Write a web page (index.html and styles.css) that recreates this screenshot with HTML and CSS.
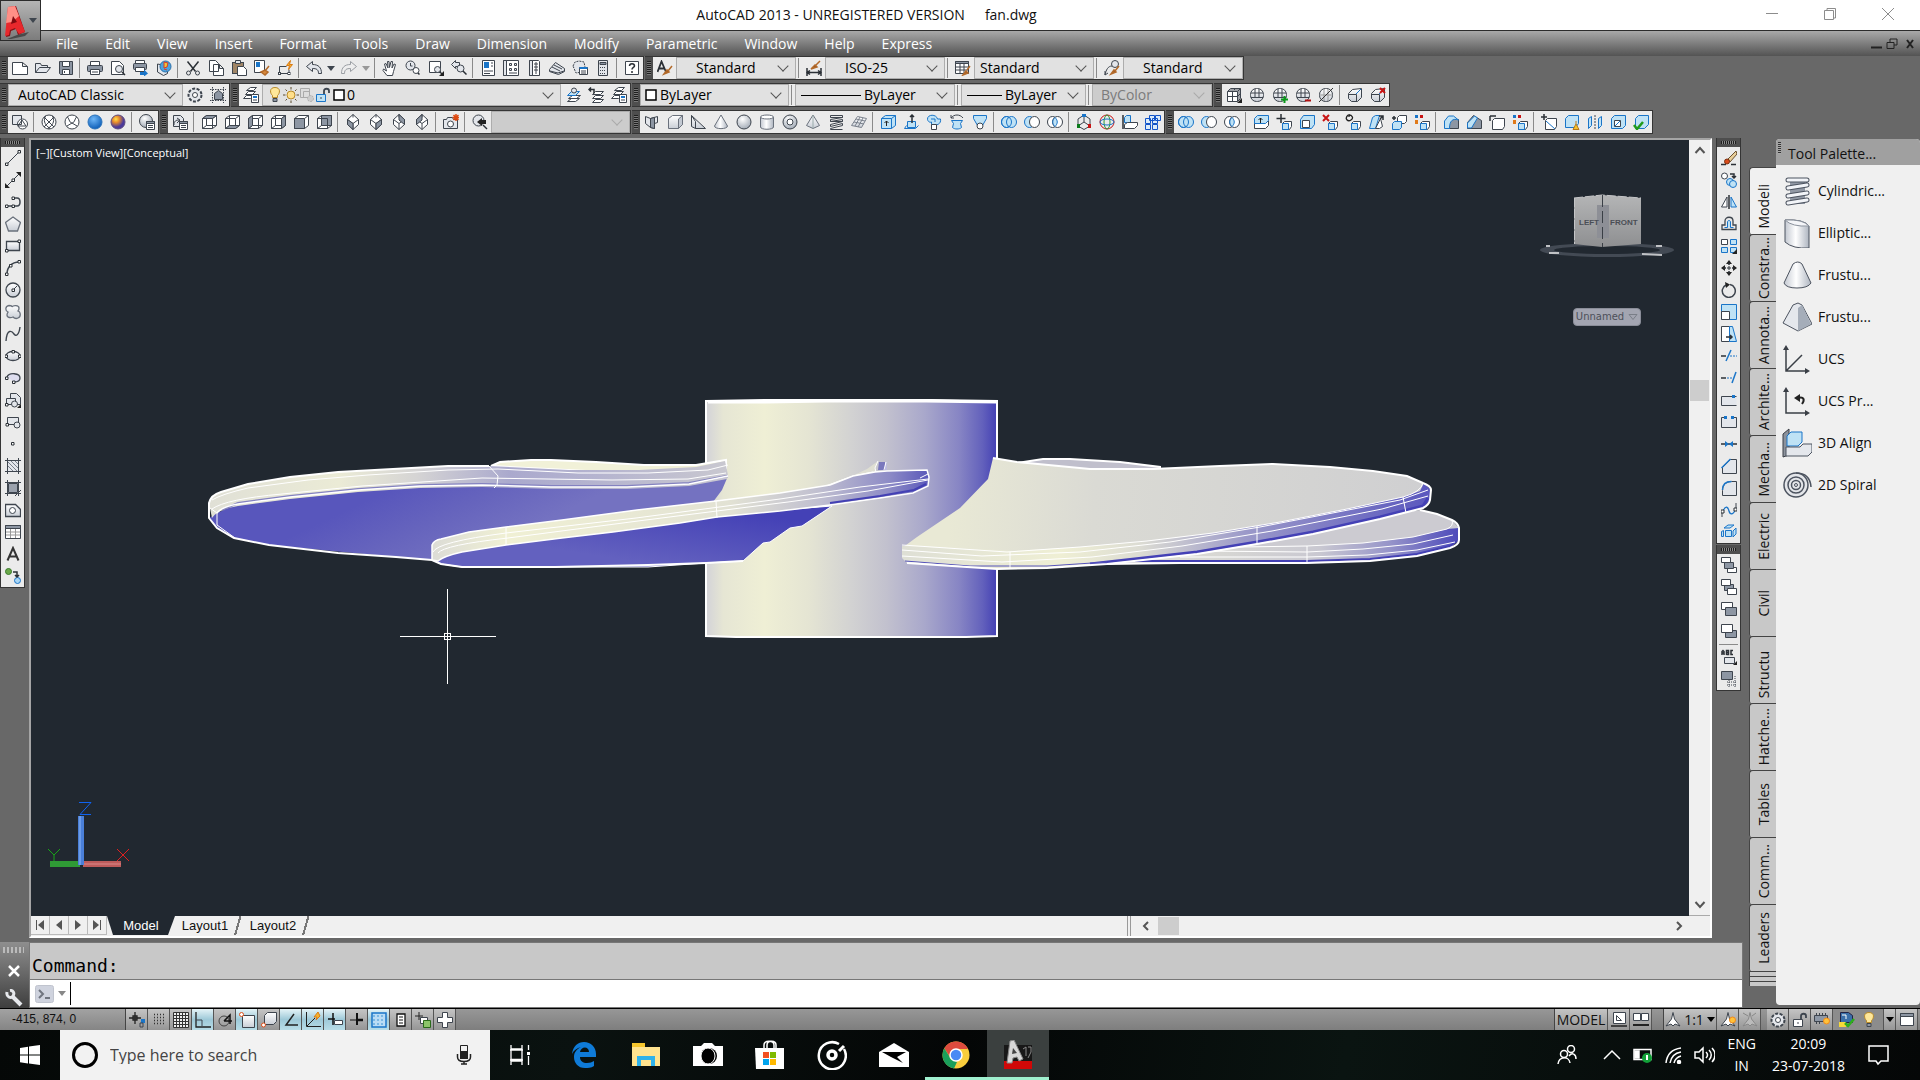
FILE: index.html
```html
<!DOCTYPE html>
<html lang="en">
<head>
<meta charset="utf-8">
<title>AutoCAD 2013 - fan.dwg</title>
<link rel="stylesheet" href="styles.css">
</head>
<body>
<svg class="sprite" width="0" height="0" aria-hidden="true">
<defs>
<linearGradient id="gs" x1="0" y1="0" x2="0" y2="1"><stop offset="0" stop-color="#fff"/><stop offset="1" stop-color="#c9ced6"/></linearGradient>
<linearGradient id="gh" x1="0" y1="0" x2="1" y2="0"><stop offset="0" stop-color="#c3c8d1"/><stop offset=".45" stop-color="#fff"/><stop offset="1" stop-color="#aeb5c0"/></linearGradient>
<radialGradient id="gsph" cx=".4" cy=".3" r=".7"><stop offset="0" stop-color="#fff"/><stop offset="1" stop-color="#a5adb8"/></radialGradient>
<radialGradient id="gblue" cx=".4" cy=".3" r=".7"><stop offset="0" stop-color="#6db6f7"/><stop offset="1" stop-color="#0f5fb8"/></radialGradient>
<radialGradient id="gsun" cx=".35" cy=".3" r=".7"><stop offset="0" stop-color="#ffe04a"/><stop offset=".35" stop-color="#e88a2c"/><stop offset=".8" stop-color="#4b3a9a"/></radialGradient>
</defs>
<symbol id="new" viewBox="0 0 16 16"><path class="w" d="M.5 2.500h10l5 4v8H.5zM10.500 2.500v4h5"/></symbol>
<symbol id="open" viewBox="0 0 16 16"><path class="s" d="M.5 12.500v-9h5l1 2h6v2M.5 12.500l4-5h11l-4 5z"/></symbol>
<symbol id="save" viewBox="0 0 16 16"><path class="g" d="M1.500 1.500h13v13h-12l-1-1z"/><path class="w" d="M4.500 1.500h7v5h-7zM4.500 9.500h7v5h-7z"/><path d="M6.500 11v2"/></symbol>
<symbol id="print" viewBox="0 0 16 16"><path class="w" d="M3.500 1.500h9v4h-9z"/><rect class="g" x=".5" y="5.500" width="15" height="6" rx="1"/><path class="w" d="M3.500 9.500h9v5h-9zM5 12h6"/></symbol>
<symbol id="preview" viewBox="0 0 16 16"><path class="w" d="M1.500 1.500h8l4 4v9h-12z"/><circle class="s" cx="9" cy="9" r="3.500"/><path class="k2" d="M12 12l3 3"/></symbol>
<symbol id="plot" viewBox="0 0 16 16"><path class="w" d="M2.500.5h9v3h-9z"/><rect class="g" x=".5" y="3.500" width="13" height="6" rx="1"/><path class="w" d="M2.500 7.500h9v4h-9z"/><path class="bf" d="M7 12h4V9.500l4 4-4 3V15H7z"/></symbol>
<symbol id="globe" viewBox="0 0 16 16"><path class="s" d="M1.500 4v8l6 3.500 4-2V6z"/><circle cx="9.500" cy="6.500" r="5.500" fill="#4ba3df" stroke="#2c6ea8"/><path fill="#f0c23a" stroke="#d33b2a" d="M8 2l4 1-1 4-3 1zM8 9l3 1"/></symbol>
<symbol id="cut" viewBox="0 0 16 16"><path class="k2" d="M2.500 1.500l8 10M13.500 1.500l-8 10"/><ellipse cx="3.500" cy="13" rx="2" ry="2"/><ellipse cx="12.500" cy="13" rx="2" ry="2"/></symbol>
<symbol id="copy" viewBox="0 0 16 16"><path class="w" d="M1.500.5h6l3 3v8h-9zM5.500 4.500h6l4 4v7h-10zM11.500 4.500v4h4"/></symbol>
<symbol id="paste" viewBox="0 0 16 16"><rect x="1.500" y="2.500" width="11" height="11" fill="#a08566"/><path class="s" d="M4.500.5h5v3h-5z"/><path class="w" d="M6.500 6.500h6l3 3v6h-9z"/></symbol>
<symbol id="match" viewBox="0 0 16 16"><path class="w" d="M.5.5h10v12H.5z"/><path class="bf" d="M2 2h4v5H2z"/><path stroke="#b36a2a" fill="#d88a3c" stroke-width="1.500" d="M15 6l-4 5M7 12l4-2 3 2-3 3z"/></symbol>
<symbol id="blk" viewBox="0 0 16 16"><path d="M2.500 13.500v-7h7M2.500 13.500H12v-4" /><rect class="w" x="1.500" y="12.500" width="2" height="2"/><rect class="w" x="11" y="12.500" width="2" height="2"/><path fill="#f5b32c" stroke="#d97a16" d="M13.500.5l-4 5h3l-1 4 4-5h-3z"/></symbol>
<symbol id="undo" viewBox="0 0 16 16"><path class="s" d="M.5 6.500l6-5v3c6 0 9 3 9 9h-3c0-4-2-5-6-5v3z"/></symbol>
<symbol id="redo" viewBox="0 0 16 16"><path fill="#eee" stroke="#9a9ea3" d="M15.500 6.500l-6-5v3c-6 0-9 3-9 9h3c0-4 2-5 6-5v3z"/></symbol>
<symbol id="pan" viewBox="0 0 16 16"><path class="w" d="M5 15.500l-4-5 .5-1.500 3 2-2-7 1.500-.5 2 4.500-.5-6.500H7l.5 6 1.500-6h1.500l-.5 6.500 2-4 1.500.5-2 7-1 4z"/></symbol>
<symbol id="zrt" viewBox="0 0 16 16"><circle class="s" cx="5.500" cy="5.500" r="4.500"/><path class="k2" d="M9 9l5.500 5.500"/><path d="M5.500 3v3h2"/><circle class="w" cx="11" cy="10.500" r="3"/></symbol>
<symbol id="zwin" viewBox="0 0 16 16"><path class="w" d="M1.500 1.500h11v11h-11z"/><circle class="s" cx="9.500" cy="9.500" r="3"/><path class="k2" d="M12 12l2 2"/><path class="k" d="M16 11v5h-5z"/></symbol>
<symbol id="zprev" viewBox="0 0 16 16"><path class="s" d="M.5 4.500l4-4v2h4v4h-4v2z"/><circle class="s" cx="9.500" cy="8.500" r="3.500"/><path class="k2" d="M12 11l3.500 3.500"/></symbol>
<symbol id="props" viewBox="0 0 16 16"><path class="w" d="M2.500.5h12v15h-12z"/><path class="bf" d="M4 2h5v6H4z"/><path d="M4 11h9M4 13.500h6M11 3h2M11 6h2"/></symbol>
<symbol id="dc" viewBox="0 0 16 16"><path class="w" d="M.5.5h15v15H.5z"/><path class="s" d="M.5.5h3v15h-3zM6.500 3.500h2v2h-2zM11.500 3.500h2v2h-2zM6.500 8.500h2v2h-2zM11.500 8.500h2v2h-2z"/><path d="M6 13h8"/></symbol>
<symbol id="tp" viewBox="0 0 16 16"><path class="w" d="M3.500.5h9l1 1v14h-10z"/><path class="s" d="M3.500.5h3v15h-3z"/><path d="M8 4h4M8 7h4M8 10h4M10 2v12"/></symbol>
<symbol id="sheet" viewBox="0 0 16 16"><path class="s" d="M.5 9.500l6-7 9 6v3l-6 3-9-3z"/><path d="M1 11l8 2 6-2M3 7l8 4M5 5l8 4"/></symbol>
<symbol id="mark" viewBox="0 0 16 16"><path stroke-dasharray="2 1" class="s" d="M1 6l2-4 4-1 5 1 1 5-3 5-6 1z"/><path class="w" d="M7.500 7.500h8v7h-8z"/><path class="bf" d="M7.500 7h8v2h-8z"/><path d="M9 11h5M9 13h5"/></symbol>
<symbol id="calc" viewBox="0 0 16 16"><path class="s" d="M3.500.5h9v15h-9z"/><path class="g" d="M5 2.500h6v2H5z"/><path stroke-dasharray="1 1" d="M5 7.500h6M5 10.500h6M5 13.500h6"/></symbol>
<symbol id="help" viewBox="0 0 16 16"><path class="w" d="M1.500 1.500h13v13h-13z"/><path class="k2" d="M5.500 6c0-3 5-3 5 0 0 1.500-2.500 1.500-2.500 3.500M8 11v2"/></symbol>
<symbol id="tsty" viewBox="0 0 16 16"><path stroke="#2b3036" stroke-width="1.800" d="M.5 12L4.500 1.500 9 12M2 8.500h5"/><path stroke="#b36a2a" fill="#7c4a26" stroke-width="1.500" d="M15 6l-4 5M7 14l3-4 2 2z"/></symbol>
<symbol id="dsty" viewBox="0 0 16 16"><path class="k2" d="M1 8v8M15 8v8M1 12.500h14M4 10.500l-3 2 3 2M12 10.500l3 2-3 2"/><path stroke="#b36a2a" fill="#7c4a26" stroke-width="1.500" d="M14 1l-5 5M5 9l4-4 2 2z"/></symbol>
<symbol id="tbsty" viewBox="0 0 16 16"><path class="w" d="M.5 1.500h13v12H.5z"/><path class="g" d="M.5 1.500h13v2H.5z"/><path d="M.5 7h13M.5 10h13M5 3v10M9 3v10"/><path stroke="#b36a2a" fill="#7c4a26" stroke-width="1.500" d="M15 6l-3 4M8 15l3-4 2 2z"/></symbol>
<symbol id="mlsty" viewBox="0 0 16 16"><circle cx="11" cy="4" r="3.500" class="s"/><path d="M8 6c-4 0-6 4-7 9M1 11v4l3-2"/><path stroke="#b36a2a" fill="#7c4a26" stroke-width="1.500" d="M15 6l-4 5M7 14l3-4 2 2z"/></symbol>
<symbol id="gear" viewBox="0 0 16 16"><circle cx="8" cy="8" r="6.500" class="s" stroke-dasharray="3 1.500" stroke-width="2"/><circle cx="8" cy="8" r="5" class="s" stroke="none"/><circle cx="8" cy="8" r="2.500" class="w"/></symbol>
<symbol id="wsp" viewBox="0 0 16 16"><path stroke-dasharray="1.500 1" d="M0 2.500h16M0 13.500h16M2.500 0v16M13.500 0v16"/><path class="g" d="M4.500 12.500v-6l4-3 4 3v6z"/></symbol>
<symbol id="layp" viewBox="0 0 16 16"><path class="w" d="M3.500 3.500l4-3h6l-3 3zM2.500 7.500l3-3h7l-3 3zM.5 11.500l3-3h7l-3 3z"/><path class="w" d="M8.500 7.500h7v8h-7z"/><path class="bf" d="M10 9h4v2h-4z"/><path d="M10 13h4"/></symbol>
<symbol id="bulb" viewBox="0 0 16 16"><path fill="#ffe89a" stroke="#b88a2a" d="M8 .5c-6 0-5 6-2.500 8v2h5v-2C13 6.500 14 .5 8 .5z"/><path class="g" d="M6 11.500h4v3H6z"/></symbol>
<symbol id="sun" viewBox="0 0 16 16"><path stroke="#5a4a2a" stroke-dasharray="2.500 11 2.500 0" d="M8 0v16M0 8h16"/><path stroke="#5a4a2a" stroke-dasharray="2 11.500 2 0" d="M2.500 2.500l11 11M13.500 2.500l-11 11"/><circle cx="8" cy="8" r="4" fill="#ffdf8a" stroke="#b88a2a"/></symbol>
<symbol id="vpf" viewBox="0 0 16 16"><path fill="#ddd" stroke="#aaa" d="M1.500 1.500h9v9h-9zM4.500 4.500h6v6h-6z"/><circle cx="11.500" cy="11.500" r="3" fill="#ccc" stroke="#aaa" stroke-dasharray="2 1"/></symbol>
<symbol id="lock" viewBox="0 0 16 16"><path class="b" d="M1.500 7.500h9v7h-9z"/><path stroke-width="1.800" stroke="#3c444e" d="M9 7V4c0-3 5-3 5 0v2"/><path d="M6 10v2"/></symbol>
<symbol id="lockg" viewBox="0 0 16 16"><path class="w" d="M1.500 7.500h9v7h-9z"/><path stroke-width="1.800" stroke="#3c444e" d="M9 7V4c0-3 5-3 5 0v2"/><path d="M6 10v2"/></symbol>
<symbol id="sq" viewBox="0 0 16 16"><path fill="#fff" stroke="#000" stroke-width="1.500" d="M3 3h10v10H3z"/></symbol>
<symbol id="lay" viewBox="0 0 16 16"><path class="w" d="M3.500 11.500l4-3h8l-4 3zM2.500 14.500l4-3h8l-4 3z"/><path class="b" d="M2.500 8.500l4-4h8l-4 4z"/><circle class="s" cx="9" cy="3.500" r="2.500"/></symbol>
<symbol id="layb" viewBox="0 0 16 16"><path class="w" d="M4.500 7.500l3-3h8l-3 3zM4.500 11.500l3-3h8l-3 3zM4.500 15.500l3-3h8l-3 3z"/><path class="k2" d="M1 2.500h5v4M3 .5l-2 2 2 2"/></symbol>
<symbol id="mesh" viewBox="0 0 16 16"><path class="w" d="M1.500 4.500l3-3h10v10l-3 3h-10z"/><path d="M1.500 4.500h10v10M11.500 4.500l3-3M6.500 4.500v10M1.500 9.500h10l3-3M3 3h10v10M8 3l2-2"/><path class="k" d="M16 11v5h-5z"/></symbol>
<symbol id="sm" viewBox="0 0 16 16"><rect x="1.500" y="1.500" width="13" height="13" rx="6" fill="url(#gs)"/><path d="M2 6h12M2 10.500h12M6 2v8M10 2v8"/></symbol>
<symbol id="smp" viewBox="0 0 16 16"><use href="#sm"/><path stroke="#0a9a1a" stroke-width="2" d="M9 12.500h7M12.500 9v7"/></symbol>
<symbol id="smm" viewBox="0 0 16 16"><use href="#sm"/><path stroke="#b01010" stroke-width="2" d="M10 13.500h6"/></symbol>
<symbol id="smn" viewBox="0 0 16 16"><rect x="1.500" y="1.500" width="13" height="13" rx="6" fill="url(#gs)"/><path stroke="#999" d="M6 2v12M10 2v12M2 8h12"/><path stroke="#333" d="M1 15L15 1"/></symbol>
<symbol id="crs" viewBox="0 0 16 16"><path fill="url(#gs)" d="M1.500 6.500l4-4 9-1v9l-4 4-6 0-3-3z"/><path stroke="#1a75c8" d="M9 7l5-5"/><path d="M1.500 7.500h8v7"/></symbol>
<symbol id="crx" viewBox="0 0 16 16"><use href="#crs"/><path stroke="#c81414" stroke-width="2" d="M10 1l5 5M15 1l-5 5"/></symbol>
<symbol id="wf2" viewBox="0 0 16 16"><path class="s" d="M.5 1.500h9v9h-9z"/><circle cx="10.500" cy="10" r="5" class="w"/><path d="M5.500 10.500h4v-5M6 12l4-6 4 6z"/></symbol>
<symbol id="wire" viewBox="0 0 16 16"><circle class="w" cx="8" cy="8" r="7"/><path d="M3 3l10 10M13 3L3 13M5 1.500c-3 4-2 9 4 13M11 1.500c3 4 2 9-4 13"/></symbol>
<symbol id="hid" viewBox="0 0 16 16"><circle class="w" cx="8" cy="8" r="7"/><path d="M3 3c2 0 2 6 5 6s3-6 5-6M3 12l5-3M13 12l-5-3"/></symbol>
<symbol id="real" viewBox="0 0 16 16"><circle cx="8" cy="8" r="7" fill="url(#gblue)" stroke="#2d74bb"/></symbol>
<symbol id="conc" viewBox="0 0 16 16"><circle cx="8" cy="8" r="7" fill="url(#gsun)" stroke="#5d4a80"/></symbol>
<symbol id="vsm" viewBox="0 0 16 16"><circle cx="7" cy="7" r="6.500" fill="url(#gsph)"/><path class="w" d="M7.500 7.500h8v8h-8z"/><path class="g" d="M7.500 7.500h8v2h-8z"/><path d="M9 11.500h5M9 13.500h5"/></symbol>
<symbol id="view" viewBox="0 0 16 16"><path class="s" d="M1.500 12.500v-11h7l3 3v8z"/><path d="M2 11c0-4 2-5 5-5M5 4l3 2-3 3"/><path class="w" d="M7.500 7.500h8v8h-8z"/><path class="g" d="M7.500 7.500h8v2h-8z"/><path d="M9 11.500h5M9 13.500h5"/></symbol>
<symbol id="box" viewBox="0 0 16 16"><path class="w" d="M1.500 4.500l4-3h10v10l-4 3h-10z"/><path d="M1.500 4.500h10v10M11.500 4.500l4-3M5.500 1.500v10h10M5.500 11.500l-4 3"/></symbol>
<symbol id="vt" viewBox="0 0 16 16"><use href="#box"/><path class="g" d="M1.500 4.500l4-3h10l-4 3z"/></symbol>
<symbol id="vb" viewBox="0 0 16 16"><use href="#box"/><path class="g" d="M1.500 14.500l4-3h10l-4 3z"/></symbol>
<symbol id="vl" viewBox="0 0 16 16"><use href="#box"/><path class="g" d="M1.500 4.500l4-3v10l-4 3z"/></symbol>
<symbol id="vr" viewBox="0 0 16 16"><use href="#box"/><path class="g" d="M11.500 4.500l4-3v10l-4 3z"/></symbol>
<symbol id="vf" viewBox="0 0 16 16"><path class="w" d="M1.500 4.500l4-3h10v10l-4 3h-10z"/><path d="M11.500 4.500l4-3"/><path class="g" d="M1.500 4.500h10v10h-10z"/></symbol>
<symbol id="vk" viewBox="0 0 16 16"><use href="#box"/><path class="g" d="M5.500 1.500h10v10h-10z"/><path d="M1.500 4.500h10v10"/></symbol>
<symbol id="iso" viewBox="0 0 16 16"><path class="w" d="M8 .5l5.500 5v5l-5.500 5-5.500-5v-5z"/><path d="M2.500 5.500l5.500 4 5.500-4M8 9.500v6M8 .5v3"/></symbol>
<symbol id="iso1" viewBox="0 0 16 16"><use href="#iso"/><path class="g" d="M2.500 5.500l5.500 4v6l-5.500-5z"/></symbol>
<symbol id="iso2" viewBox="0 0 16 16"><use href="#iso"/><path class="g" d="M13.500 5.500l-5.500 4v6l5.500-5z"/></symbol>
<symbol id="iso3" viewBox="0 0 16 16"><use href="#iso"/><path class="g" d="M8 .5l5.500 5v5L8 6z"/></symbol>
<symbol id="iso4" viewBox="0 0 16 16"><use href="#iso"/><path class="g" d="M8 .5l-5.500 5v5L8 6z"/></symbol>
<symbol id="cam" viewBox="0 0 16 16"><path class="s" d="M.5 5.500h3l1-2h5l1 2h4v9H.5z"/><circle cx="7.500" cy="10" r="3" class="w"/><path stroke="#e04a10" stroke-width="1.500" d="M13 0v7M9.500 3.500h7M10.500 1l5 5M15.500 1l-5 5"/></symbol>
<symbol id="vprev" viewBox="0 0 16 16"><circle class="s" cx="6.500" cy="6.500" r="5.500"/><path class="k" d="M5 8l5-4v2h4v4h-4v2z"/><path class="k2" d="M11 11l4 4"/></symbol>
<symbol id="psol" viewBox="0 0 16 16"><path class="s" d="M1.500 2.500l5 2v9l-5-4zM6.500 4.500l7-2v6l-3 1v5l-4-1z"/><path class="g" d="M6.500 4.500l4-1v11l-4-1z"/></symbol>
<symbol id="cube" viewBox="0 0 16 16"><path fill="url(#gs)" stroke="#6a717c" d="M1.500 4.500l4-3h10v9l-4 4h-10z"/><path class="lg" stroke="#6a717c" d="M11.500 5l4-3.500v9l-4 4z"/></symbol>
<symbol id="wedge" viewBox="0 0 16 16"><path fill="url(#gs)" d="M1.500 1.500v11l4 2h10z"/><path d="M1.500 1.500l4 6v7"/></symbol>
<symbol id="cone" viewBox="0 0 16 16"><path fill="url(#gh)" stroke="#6a717c" d="M8 1l6.500 11c0 3.500-13 3.500-13 0z"/></symbol>
<symbol id="sph" viewBox="0 0 16 16"><circle cx="8" cy="8" r="7" fill="url(#gsph)"/></symbol>
<symbol id="cyl" viewBox="0 0 16 16"><path fill="url(#gh)" stroke="#6a717c" d="M1.500 3v10c0 3 13 3 13 0V3"/><ellipse class="w" stroke="#6a717c" cx="8" cy="3" rx="6.500" ry="2"/></symbol>
<symbol id="tor" viewBox="0 0 16 16"><circle cx="8" cy="8" r="7" fill="url(#gsph)"/><circle class="w" cx="8" cy="8" r="3"/></symbol>
<symbol id="pyr" viewBox="0 0 16 16"><path fill="url(#gs)" stroke="#6a717c" d="M8 1l6.500 10.500-6.500 3-6.500-3z"/><path stroke="#9aa" d="M8 1v13.500"/></symbol>
<symbol id="helix" viewBox="0 0 16 16"><path d="M2.500 1.500h12v2l-12 2v2l12-2v2l-12 3v2l12-3v2l-12 3v1h12M2.500 1.500v2h12M2.500 7.500h12"/></symbol>
<symbol id="psurf" viewBox="0 0 16 16"><path fill="url(#gs)" stroke="#7a818c" d="M6.500 2.500l9 2-5 9-10-2z"/><path stroke="#7a818c" d="M3 8l10 2M5 5l9 2M9 3l-5 9M12 4l-5 9"/></symbol>
<symbol id="bx" viewBox="0 0 16 16"><path class="b" d="M1.500 4.500l4-3h10v10l-4 3h-10z"/><path stroke="#1a75c8" d="M1.500 4.500h10v10M11.500 4.500l4-3"/><path stroke="#222" d="M6.500 12V7M4.500 9l2-2 2 2"/></symbol>
<symbol id="ext" viewBox="0 0 16 16"><path class="b" d="M4.500 7.500h8v6h-8z"/><path stroke="#1a75c8" d="M1.500 14.500h11l3-3M1.500 14.500l2-3"/><path class="k2" d="M9 9V1M7 3l2-2 2 2"/></symbol>
<symbol id="swp" viewBox="0 0 16 16"><path class="b" d="M1.500 5c0-5 9-5 10 0h3c1 5-4 7-9 6v-3c-2 1-4-1-4-3zM5 5h4v3"/><path class="w" d="M5.500 10.500h5v5h-5z"/></symbol>
<symbol id="rev" viewBox="0 0 16 16"><path class="b" d="M2.500 6.500h11l-2 3 1 4c-2 2-7 2-9 0l1-4z"/><path d="M2 4c3-4 9-4 12 0M2 1v3h3"/></symbol>
<symbol id="loft" viewBox="0 0 16 16"><path class="b" d="M1.500 1.500h13v3l-4 7h-5l-4-7z"/><circle class="w" cx="8" cy="12" r="3"/></symbol>
<symbol id="uni" viewBox="0 0 16 16"><ellipse class="b" cx="5.500" cy="8" rx="5" ry="5.500"/><ellipse class="b" cx="10.500" cy="8" rx="5" ry="5.500"/><ellipse cx="5.500" cy="8" rx="5" ry="5.500" stroke="#1a75c8"/></symbol>
<symbol id="sub" viewBox="0 0 16 16"><ellipse class="b" cx="5.500" cy="8" rx="5" ry="5.500"/><ellipse class="w" cx="10.500" cy="8" rx="5" ry="5.500"/></symbol>
<symbol id="int" viewBox="0 0 16 16"><ellipse class="w" cx="5.500" cy="8" rx="5" ry="5.500"/><ellipse class="w" cx="10.500" cy="8" rx="5" ry="5.500"/><path class="b" d="M8 3.500c3 3 3 6 0 9-3-3-3-6 0-9z"/></symbol>
<symbol id="mv3" viewBox="0 0 16 16"><path d="M8 1l6 4v7l-6 3.500L2 12V5zM8 8V1M8 8l6 4M8 8l-6 4"/><path fill="#c81414" stroke="none" d="M12 10h3v4h-3z"/><path fill="#0a7a1a" stroke="none" d="M1 10h3v4H1z"/><path class="bf" d="M6 0h4v3H6z"/></symbol>
<symbol id="rot3" viewBox="0 0 16 16"><circle cx="8" cy="8" r="7" stroke="#c81414"/><ellipse cx="8" cy="8" rx="3" ry="7" stroke="#2a9a3a"/><ellipse cx="8" cy="8" rx="7" ry="3" stroke="#1a75c8"/></symbol>
<symbol id="al3" viewBox="0 0 16 16"><path class="b" d="M2.500 3.500l2-2h4v7h-6z"/><path class="w" d="M2.500 10.500l3-2h10v3l-3 3h-10z"/><path class="k2" d="M1 1v14"/></symbol>
<symbol id="ar3" viewBox="0 0 16 16"><path fill="#dcecfa" stroke="#1254c8" d="M4.500 1.500h5v5h-5zM10.500 1.500h5v5h-5zM.5 4.500h5v5h-5zM7.500 4.500h5v5h-5zM.5 10.500h5v5h-5zM7.500 10.500h5v5h-5z"/></symbol>
<symbol id="exf" viewBox="0 0 16 16"><path class="w" d="M1.500 8.500l3-2h11v5l-3 3h-11z"/><path class="b" d="M1.500 4.500l3-3h11v5l-3 3h-11z"/><path stroke="#222" d="M7.500 9V4M5.500 6l2-2 2 2"/></symbol>
<symbol id="sb" viewBox="0 0 16 16"><path class="w" d="M6.500 9.500l2-2h7v5l-2 3h-7z"/><path class="b" d="M6.500 9.500h6v6h-6z"/></symbol>
<symbol id="mvf" viewBox="0 0 16 16"><use href="#sb"/><path class="k2" d="M5 0v9M.5 4.500h9"/></symbol>
<symbol id="off" viewBox="0 0 16 16"><path class="b" d="M1.500 5.500l3-4h11v9l-3 4h-11z"/><path class="w" d="M3.500 6.500h7v7h-7z"/></symbol>
<symbol id="delf" viewBox="0 0 16 16"><use href="#sb"/><path stroke="#c81414" stroke-width="2" d="M1 1l6 6M7 1L1 7"/></symbol>
<symbol id="rof" viewBox="0 0 16 16"><use href="#sb"/><path stroke="#222" stroke-width="1.300" d="M3 1c-4 4 0 7 3 5s1-5-2-5M4 0v3"/></symbol>
<symbol id="tap" viewBox="0 0 16 16"><path class="b" d="M1.500 14.500l3-11 3-2h4l-4 13z"/><path d="M7.500 14.500l5-10 2 8-3 2z" class="w"/><path class="k2" d="M11 2h4v4M15 2l-3 3"/></symbol>
<symbol id="cpf" viewBox="0 0 16 16"><path class="w" d="M6.500 3.500l2-2h7v6l-2 2h-7z"/><path class="b" d="M1.500 9.500l2-2h7v6l-2 2h-7z"/><path class="k2" d="M1 4h4M3 2v4"/></symbol>
<symbol id="colf" viewBox="0 0 16 16"><use href="#sb"/><path class="bf" d="M1 1h3v3H1z"/><path fill="#c81414" stroke="none" d="M6 1h3v3H6z"/><path fill="#e07a1a" stroke="none" d="M1 6h3v4H1z"/></symbol>
<symbol id="fil" viewBox="0 0 16 16"><path class="g" d="M5.500 5.500h10v9h-10z"/><path class="b" d="M1.500 7l4-5h5l5 4c-6-2-9 1-9 8.500h-5z"/></symbol>
<symbol id="cha" viewBox="0 0 16 16"><path class="g" d="M1.500 8.500l6-7 8 5v8h-14z"/><path class="b" d="M1.500 9l7-7 3 2-6 10h-4z"/></symbol>
<symbol id="cpe" viewBox="0 0 16 16"><path class="w" d="M3.500 6.500l2-2h10v8l-2 3h-10z"/><path class="k2" d="M1 2h6M1 2v5"/></symbol>
<symbol id="imp" viewBox="0 0 16 16"><path class="w" d="M4.500 6.500l2-2h9v8l-2 3h-9z"/><path stroke="#1a75c8" d="M5 7l9 8"/><path class="k2" d="M3 0v6M0 3h6"/></symbol>
<symbol id="cln" viewBox="0 0 16 16"><path class="b" d="M1.500 4.500l3-3h10v8l-3 4h-10z"/><path fill="#f5c32c" stroke="#b87a16" d="M12 7v3l3 5.500H9L12 10"/></symbol>
<symbol id="sepr" viewBox="0 0 16 16"><path class="b" d="M1.500 4.500l3-2v9l-3 3zM11.500 4.500l3-2v9l-3 3z"/><path stroke-dasharray="2 1" d="M8 1v14"/></symbol>
<symbol id="shl" viewBox="0 0 16 16"><path class="b" d="M1.500 4.500l3-3h11v10l-3 3h-11z"/><path class="w" d="M4.500 6.500h6v6h-6z"/><path stroke="#1a75c8" d="M5 12l5-5"/></symbol>
<symbol id="chk" viewBox="0 0 16 16"><path class="b" d="M2.500 4.500l3-3h10v9l-4 4h-9z"/><path stroke="#1f9a1a" stroke-width="2.500" d="M1 11l3 4 6-7"/></symbol>
<symbol id="line" viewBox="0 0 16 16"><path d="M2 14L14 2"/><path class="n" d="M.5 13h2.500v2.500H.5zM13 .5h2.500V3H13z"/></symbol>
<symbol id="xl" viewBox="0 0 16 16"><path d="M2 14L14 2"/><path class="k" d="M0 11v5h5zM16 5V0h-5z"/><path class="n" d="M7 7h2.500v2.500H7z"/></symbol>
<symbol id="pl" viewBox="0 0 16 16"><path stroke-width="1.500" d="M2 12h10c4 0 4-8 0-8H8"/><path class="n" d="M.5 11H3v2.500H.5zM7 3h2.500v2.500H7zM7 11h2.500v2.500H7z"/></symbol>
<symbol id="pent" viewBox="0 0 16 16"><path fill="url(#gs)" stroke="#6a717c" stroke-width="1.300" d="M8 1l7.500 5.500-3 8.500h-9l-3-8.500z"/></symbol>
<symbol id="rect" viewBox="0 0 16 16"><path fill="url(#gs)" stroke-width="1.300" d="M1.500 3.500h13v9h-13z"/><path class="n" d="M.5 11.500H3V14H.5zM13 2h2.500v2.500H13z"/></symbol>
<symbol id="arc" viewBox="0 0 16 16"><path stroke-width="1.500" d="M2 14C2 7 7 2 14 2"/><path class="n" d="M.5 13H3v2.500H.5zM4.500 4.500H7V7H4.500zM13 .5h2.500V3H13z"/></symbol>
<symbol id="cir" viewBox="0 0 16 16"><circle cx="8" cy="8" r="7" fill="url(#gs)" stroke-width="1.300"/><path d="M8 8l4-4"/><path class="n" d="M7 7h2.500v2.500H7z"/></symbol>
<symbol id="cloud" viewBox="0 0 16 16"><path fill="url(#gs)" stroke="#6a717c" stroke-width="1.300" d="M3 8C0 7 0 2 4 1.500c2 0 3 1 3 1.500 1-2 7-2 7 1 0 2 0 2-1 3 3 1 3 6 0 7-2 1-4 0-5-1-2 1-6 1-6-2 0-2 1-2 1-3z"/></symbol>
<symbol id="spl" viewBox="0 0 16 16"><path stroke-width="1.400" d="M1 15C2 2 7 5 9 8s5 1 6-7"/></symbol>
<symbol id="ell" viewBox="0 0 16 16"><ellipse cx="8" cy="8" rx="7" ry="4.500" fill="url(#gs)" stroke-width="1.300"/><path class="n" d="M0 7h2.500v2.500H0zM13.500 7H16v2.500h-2.500zM7 2.500h2.500V5H7z"/></symbol>
<symbol id="ella" viewBox="0 0 16 16"><path fill="#dde" stroke-width="1.300" d="M2 7c2-5 13-4 13 1 0 3-3 4-6 4"/><path class="n" d="M.5 7H3v2.500H.5zM7.500 11H10v2.500H7.500z"/></symbol>
<symbol id="ins" viewBox="0 0 16 16"><path class="s" d="M5.500 1.500h6l4 4v7h-10z"/><path class="s" d="M1.500 6.500h9v6h-9z"/><circle cx="9.500" cy="12" r="3" class="s"/><path class="k" d="M16 12v4h-4z"/><path class="n" d="M.5 11.500H3V14H.5z"/></symbol>
<symbol id="mkb" viewBox="0 0 16 16"><path class="s" d="M2.500 3.500h11v7h-11z"/><circle cx="12" cy="11" r="3" class="s"/><path class="n" d="M1 9.500h2.500V12H1z"/></symbol>
<symbol id="pt" viewBox="0 0 16 16"><path class="n" d="M6.500 6.500H9V9H6.500z"/></symbol>
<symbol id="hat" viewBox="0 0 16 16"><path fill="#e3e6eb" d="M2.500 2.500h11v11h-11z"/><path d="M0 2.500h16M0 13.500h16M2.500 0v16M13.500 0v16"/><path stroke="#7a818c" d="M3 4l9 9M3 8l5 5M6 3l7 7M10 3l3 3"/></symbol>
<symbol id="grad" viewBox="0 0 16 16"><path fill="#9aa1ac" d="M3.500 3.500h9v9h-9z"/><path d="M0 2.500h16M0 13.500h16M2.500 0v16M13.500 0v16M10 16l6-6"/></symbol>
<symbol id="reg" viewBox="0 0 16 16"><path fill="url(#gs)" stroke-width="1.300" d="M.5 2.500h10l5 5v7H.5z"/><circle class="w" cx="7.500" cy="8.500" r="3"/></symbol>
<symbol id="tab" viewBox="0 0 16 16"><path class="w" d="M.5 1.500h15v13H.5z"/><path class="g" d="M.5 1.500h15v3H.5z"/><path stroke="#999" d="M1 8h14M1 11h14M5.500 5v9M10.500 5v9"/></symbol>
<symbol id="txt" viewBox="0 0 16 16"><path stroke="#333" stroke-width="2" d="M2.500 14.500L8 2l5.500 12.500M4.500 10.500h7"/></symbol>
<symbol id="addsel" viewBox="0 0 16 16"><circle cx="3.500" cy="3.500" r="3" fill="#6aa84a" stroke="#3a7a2a"/><circle cx="12.500" cy="12.500" r="3" fill="#a9d6f5" stroke="#1a75c8"/><path class="k2" d="M8 4h4v4M10 7l2 2 2-2"/></symbol>
<symbol id="era" viewBox="0 0 16 16"><path class="k2" d="M0 14.500h5M10 14.500h5"/><path fill="#e8cf9a" stroke="#6a5030" d="M15 1l-8 8 2 3 7-8z"/><circle cx="6" cy="11.500" r="2.500" fill="#d94a1a" stroke="#7a3010"/></symbol>
<symbol id="cp" viewBox="0 0 16 16"><circle class="w" cx="3.500" cy="4" r="3"/><circle class="b" cx="9" cy="10" r="3.500"/><circle class="b" cx="12" cy="12" r="3.500"/><path class="k2" d="M9 2h4v3M11 4l2 2 2-2"/></symbol>
<symbol id="mir" viewBox="0 0 16 16"><path class="w" d="M6 3v10H.5z"/><path class="b" d="M10 3v10h5.500z"/><path class="k2" d="M8 1v14"/></symbol>
<symbol id="ofs" viewBox="0 0 16 16"><path stroke-width="1.300" d="M1 13.500V9h3V5c0-5 8-5 8 0v4h3v4.500z"/><path class="b" d="M3.500 11.500h3V6c0-2 3-2 3 0v5.500h3"/></symbol>
<symbol id="arr" viewBox="0 0 16 16"><path class="w" d="M.5 1.500h6v5h-6z"/><path class="b" d="M9.500 1.500h6v5h-6zM.5 9.500h6v5h-6zM9.500 9.500h6v5h-6z"/><path class="k" d="M16 11v5h-5z"/></symbol>
<symbol id="mov" viewBox="0 0 16 16"><path class="k" d="M8 0l3 4H5zM8 16l3-4H5zM0 8l4-3v6zM16 8l-4-3v6z"/><path class="n" d="M7 7h2v2H7z"/><path class="k2" d="M8 3v2M8 11v2M3 8h2M11 8h2"/></symbol>
<symbol id="rot" viewBox="0 0 16 16"><path stroke-width="1.500" d="M9 2.500A6.500 6.500 0 1 1 5 3"/><path class="k" d="M4 0l5 2.500L5 6z"/></symbol>
<symbol id="scl" viewBox="0 0 16 16"><path class="b" d="M.5.5h15v15H.5z"/><path class="w" d="M.5 7.500h8v8h-8z"/></symbol>
<symbol id="str" viewBox="0 0 16 16"><path class="w" d="M.5.5h8v15h-8z"/><path class="b" d="M8.500.5h3l4 15h-7z"/><path class="k2" d="M5 11h6M9 9l2 2-2 2"/></symbol>
<symbol id="trim" viewBox="0 0 16 16"><path stroke="#1a75c8" stroke-width="1.500" d="M5 13L10 2"/><path class="k2" d="M0 8h5"/><path stroke="#1a75c8" stroke-dasharray="2 1" d="M9 8h7"/></symbol>
<symbol id="extd" viewBox="0 0 16 16"><path stroke="#1a75c8" stroke-width="1.500" d="M11 13l4-11"/><path class="k2" d="M0 8h5"/><path stroke="#1a75c8" stroke-dasharray="2 1" d="M6 8h6"/></symbol>
<symbol id="brp" viewBox="0 0 16 16"><path class="s" d="M15.500 4.500H.5v9h15"/><path class="bf" d="M11 3h3v3h-3z"/></symbol>
<symbol id="brk" viewBox="0 0 16 16"><path class="s" d="M3 3.500H.5v10h15v-10H13"/><path class="bf" d="M3 2h3v3H3zM10 2h3v3h-3z"/></symbol>
<symbol id="join" viewBox="0 0 16 16"><path class="k2" d="M0 8h16"/><path class="bf" d="M4 5l4 3-4 3zM12 5L8 8l4 3z"/></symbol>
<symbol id="chm" viewBox="0 0 16 16"><path class="s" d="M1.500 15.500v-6l8-8h6v14z"/><path stroke="#1a75c8" stroke-width="1.500" d="M.5 10l9-9"/></symbol>
<symbol id="flt" viewBox="0 0 16 16"><path class="s" d="M1.500 15.500v-5c0-5 3-9 9-9h5v14z"/><path stroke="#1a75c8" stroke-width="1.500" d="M1.500 10c0-5 3-8.500 9-8.500"/></symbol>
<symbol id="bln" viewBox="0 0 16 16"><path stroke="#1a75c8" stroke-width="1.300" d="M2 9c3-6 5-4 6 0s5 4 6-2"/><path d="M1 15V9M15 1v6"/><path class="n" d="M0 8h3v3H0zM13 6h3v3h-3z"/></symbol>
<symbol id="expl" viewBox="0 0 16 16"><path class="b" d="M4.500 6.500h6v6h-6zM3 4l4-3h6l-4 3zM12 7l3-3v6l-3 3zM.5 7.500l2-1v6l-2 0z"/></symbol>
<symbol id="do1" viewBox="0 0 16 16"><path class="w" d="M.5.5h9v5h-9zM6.500 10.500h9v5h-9z"/><path class="g" d="M3.500 5.500h9v6h-9z"/></symbol>
<symbol id="do2" viewBox="0 0 16 16"><path class="g" d="M3.500 5.500h9v6h-9z"/><path class="w" d="M.5.5h9v6h-9zM6.500 9.500h9v6h-9z"/></symbol>
<symbol id="do3" viewBox="0 0 16 16"><path class="w" d="M.5 1.500h11v7H.5z"/><path class="g" d="M4.500 6.500h11v8h-11z"/></symbol>
<symbol id="do4" viewBox="0 0 16 16"><path class="g" d="M4.500 7.500h11v7h-11z"/><path class="w" d="M.5 1.500h11v8H.5z"/></symbol>
<symbol id="do5" viewBox="0 0 16 16"><path class="k2" d="M1 6V2.500l1-1 1 1V6M1 4h2M5.500 6V1.500h2v4h-2M7 3.500H5.500M12 1.500h-2v4h2"/><path class="s" d="M3.500 8.500h10v6h-10z"/><path class="k" d="M16 12v4h-4z"/></symbol>
<symbol id="do6" viewBox="0 0 16 16"><path class="g" d="M.5.5h11v8H.5z"/><path stroke-dasharray="1 1" d="M6 11h10M6 14h10M8 9v7M14 5v11"/></symbol>
<symbol id="st1" viewBox="0 0 16 16"><path stroke="#222" stroke-width="1.300" d="M0 6h12M6 0v12M4 4h4v4H4z"/><path class="bf" d="M12 7h4v4h-4z"/><path d="M11 11h3v4h-3z"/></symbol>
<symbol id="st2" viewBox="0 0 16 16"><path stroke="#333" stroke-dasharray="1 2" stroke-width="1.300" d="M3 2.500h11M3 5.500h11M3 8.500h11M3 11.500h11"/></symbol>
<symbol id="st3" viewBox="0 0 16 16"><path fill="#eee" stroke="#333" d="M.5.5h15v15H.5z"/><path stroke="#333" d="M3.500 0v16M6.500 0v16M9.500 0v16M12.500 0v16M0 3.500h16M0 6.500h16M0 9.500h16M0 12.500h16"/></symbol>
<symbol id="st4" viewBox="0 0 16 16"><path stroke="#222" stroke-width="1.300" d="M1 0v15h15"/><path d="M1 8h6v6"/></symbol>
<symbol id="st5" viewBox="0 0 16 16"><circle cx="7" cy="9" r="5" stroke="#444"/><path stroke="#111" stroke-width="1.500" d="M7 9h8M7 9l6-6v9"/></symbol>
<symbol id="st6" viewBox="0 0 16 16"><path fill="url(#gs)" d="M3.500 3.500h12v12h-12z"/><circle cx="2.500" cy="2.500" r="2" fill="#fff" stroke="#e0501a"/></symbol>
<symbol id="st7" viewBox="0 0 16 16"><path fill="url(#gs)" d="M3.500 3.500l3-3h9v9l-3 3h-9z"/><circle cx="2.500" cy="13" r="2" fill="#fff" stroke="#e0501a"/></symbol>
<symbol id="st8" viewBox="0 0 16 16"><path stroke="#222" stroke-width="1.500" d="M11 2L3 13h12"/></symbol>
<symbol id="st9" viewBox="0 0 16 16"><path stroke="#222" d="M1.500 0v14.500H16M2 14l8-8"/><path fill="#f5b32c" stroke="#d97a16" d="M13 0l-4 5h3l-1 3 4-4z"/></symbol>
<symbol id="st10" viewBox="0 0 16 16"><path stroke="#111" stroke-width="1.500" d="M6 1v12M1 7h7"/><path class="w" d="M7.500 8.500h8v4h-8z"/></symbol>
<symbol id="st11" viewBox="0 0 16 16"><path stroke="#111" stroke-width="2" d="M8 1v12"/><path stroke="#111" d="M1 8h7"/><path stroke="#111" stroke-width="2.500" d="M8 8h6"/></symbol>
<symbol id="st12" viewBox="0 0 16 16"><path fill="#b9dcf5" stroke="#1a75c8" stroke-width="1.500" d="M1 1h14v14H1z"/><path stroke="#7ab8e4" stroke-width="2" stroke-dasharray="2 2" d="M2 4h12M2 8h12M2 12h12"/></symbol>
<symbol id="st13" viewBox="0 0 16 16"><path fill="#fff" stroke="#111" stroke-width="1.300" d="M4 2h8v12H4z"/><path stroke="#111" d="M6 5h4M6 8h4M6 11h4"/></symbol>
<symbol id="st14" viewBox="0 0 16 16"><path stroke="#222" d="M4 0v8M0 4h8"/><path class="w" d="M5.500 5.500h7v6h-7z"/><path fill="#8cc46a" stroke="#2a6a1a" d="M8.500 8.500h7v7h-7z"/></symbol>
<symbol id="st15" viewBox="0 0 16 16"><path class="w" d="M5.500.5h5v5h5v5h-5v5h-5v-5h-5v-5h5z"/></symbol>
<symbol id="sr1" viewBox="0 0 16 16"><path class="w" d="M2.500.5h12v11h-12z"/><path d="M5.500 3.500v5h5z"/><path stroke="#222" stroke-width="1.500" d="M0 14h16"/></symbol>
<symbol id="sr2" viewBox="0 0 16 16"><path class="w" d="M.5 1.500h7v7h-7zM8.500 1.500h7v7h-7z"/><path stroke="#222" stroke-width="2" d="M0 13h16"/></symbol>
<symbol id="ann" viewBox="0 0 16 16"><path class="w" d="M8 .5L6.500 7 1 14l5-2 2 2 2-2 5 2-5.500-7z"/></symbol>
<symbol id="ann2" viewBox="0 0 16 16"><use href="#ann"/><circle cx="12.500" cy="8" r="3" fill="#ffc23a" stroke="#f08a1a"/></symbol>
<symbol id="ann3" viewBox="0 0 16 16"><path fill="#bbb" stroke="#888" d="M8 .5L6.500 7 1 14l5-2 2 2 2-2 5 2-5.500-7zM1 1l5 3M10 4l4-3"/></symbol>
<symbol id="hw" viewBox="0 0 16 16"><path fill="#8d97a5" d="M.5 3.500h13v6H.5z"/><path d="M2.500 1v2M5.500 1v2M8.500 1v2M11.500 1v2M2.500 10v2M5.500 10v2"/><circle cx="12.500" cy="9" r="3" fill="#ffc23a" stroke="#f08a1a"/></symbol>
<symbol id="iso9" viewBox="0 0 16 16"><path fill="#3a6ea8" stroke="#224" d="M1.500.5h8l4 3v7h-12z"/><path fill="#f5d93a" stroke="none" d="M0 10h7v5H0z"/><path stroke="#fff" d="M3 3h4v4"/><path stroke="#2fae1a" stroke-width="2.500" d="M6 11l3 3 6-7"/></symbol>
<symbol id="cls" viewBox="0 0 16 16"><path class="w" d="M1.500 1.500h13v12h-13z"/><path class="g" d="M1.500 1.500h13v3h-13z"/></symbol>
<symbol id="aut" viewBox="0 0 28 36"><path fill="#4a4a4a" d="M6 36l10-4 12-3-4 4-14 3z"/><path fill="#8b0f14" d="M5 34L8 5l7-2 9 26-7 3-2-6-5 2-1 5z"/><path fill="#e8282c" d="M4 33L7 4l7-1 10 26-6 2-4-6-5 2-1 5z"/><path fill="#ff8f86" d="M7 4l7-1 4 10-7 6-6 1z"/><path fill="#7d0a10" d="M10 21l2-8 4 6z"/></symbol>
</svg>

<header class="titlebar">
  <button class="appmenu" aria-label="Application menu"><svg width="28" height="36"><use href="#aut"/></svg><span class="caret"></span></button>
  <h1 class="title"><span>AutoCAD 2013 - UNREGISTERED VERSION</span><span>fan.dwg</span></h1>
  <div class="wincontrols">
    <button aria-label="Minimize"><svg width="14" height="14"><path d="M1 6.500h12"/></svg></button>
    <button aria-label="Restore"><svg width="14" height="14"><path d="M1.500 3.500h9v9h-9zM4 3V1.500h8.500V11H11"/></svg></button>
    <button aria-label="Close"><svg width="14" height="14"><path d="M1 1l12 12M13 1L1 13"/></svg></button>
  </div>
</header>

<nav class="menubar">
  <button>File</button><button>Edit</button><button>View</button><button>Insert</button><button>Format</button><button>Tools</button><button>Draw</button><button>Dimension</button><button>Modify</button><button>Parametric</button><button>Window</button><button>Help</button><button>Express</button>
  <span class="docctl"><svg width="50" height="16"><path d="M1 11.500h11" stroke-width="2"/><path d="M17 6.500h7v6h-7zM20 6V3h7v6h-3"/><path d="M37 4l6 8M43 4l-6 8" stroke-width="2"/></svg></span>
</nav>

<section class="toolbars">
<div class="row">
  <div class="tb"><i class="grip"></i>
    <button aria-label="New"><svg><use href="#new"/></svg></button><button aria-label="Open"><svg><use href="#open"/></svg></button><button aria-label="Save"><svg><use href="#save"/></svg></button><i class="sep"></i>
    <button aria-label="Plot"><svg><use href="#print"/></svg></button><button aria-label="Preview"><svg><use href="#preview"/></svg></button><button aria-label="Publish"><svg><use href="#plot"/></svg></button><button aria-label="3DDWF"><svg><use href="#globe"/></svg></button><i class="sep"></i>
    <button aria-label="Cut"><svg><use href="#cut"/></svg></button><button aria-label="Copy clip"><svg><use href="#copy"/></svg></button><button aria-label="Paste"><svg><use href="#paste"/></svg></button><button aria-label="Match properties"><svg><use href="#match"/></svg></button><button aria-label="Block editor"><svg><use href="#blk"/></svg></button><i class="sep"></i>
    <button aria-label="Undo"><svg><use href="#undo"/></svg></button><button class="drop" aria-label="Undo list"><span class="caret"></span></button><button aria-label="Redo"><svg><use href="#redo"/></svg></button><button class="drop dim" aria-label="Redo list"><span class="caret"></span></button><i class="sep"></i>
    <button aria-label="Pan"><svg><use href="#pan"/></svg></button><button aria-label="Zoom realtime"><svg><use href="#zrt"/></svg></button><button aria-label="Zoom window"><svg><use href="#zwin"/></svg></button><button aria-label="Zoom previous"><svg><use href="#zprev"/></svg></button><i class="sep"></i>
    <button aria-label="Properties"><svg><use href="#props"/></svg></button><button aria-label="DesignCenter"><svg><use href="#dc"/></svg></button><button aria-label="Tool palettes"><svg><use href="#tp"/></svg></button><button aria-label="Sheet sets"><svg><use href="#sheet"/></svg></button><button aria-label="Markup"><svg><use href="#mark"/></svg></button><button aria-label="Calculator"><svg><use href="#calc"/></svg></button><i class="sep"></i>
    <button aria-label="Help"><svg><use href="#help"/></svg></button>
  </div>
  <div class="tb"><i class="grip"></i>
    <button aria-label="Text style"><svg><use href="#tsty"/></svg></button><div class="combo c120 deep"><select aria-label="Text style name"><option>Standard</option></select></div><i class="sep"></i>
    <button aria-label="Dimension style"><svg><use href="#dsty"/></svg></button><div class="combo c120 deep"><select aria-label="Dimension style name"><option>ISO-25</option></select></div><i class="sep"></i>
    <button aria-label="Table style"><svg><use href="#tbsty"/></svg></button><div class="combo c120"><select aria-label="Table style name"><option>Standard</option></select></div><i class="sep"></i>
    <button aria-label="Multileader style"><svg><use href="#mlsty"/></svg></button><div class="combo c120 deep"><select aria-label="Multileader style name"><option>Standard</option></select></div>
  </div>
</div>
<div class="row">
  <div class="tb"><i class="grip"></i><div class="combo c175 mid"><select aria-label="Workspace"><option>AutoCAD Classic</option></select></div>
    <button aria-label="Workspace settings"><svg><use href="#gear"/></svg></button><button aria-label="My workspace"><svg><use href="#wsp"/></svg></button>
  </div>
  <div class="tb"><i class="grip"></i><button aria-label="Layer properties"><svg><use href="#layp"/></svg></button>
    <div class="combo c299"><svg><use href="#bulb"/></svg><svg><use href="#sun"/></svg><svg><use href="#vpf"/></svg><svg><use href="#lock"/></svg><svg><use href="#sq"/></svg><select aria-label="Layer"><option>0</option></select></div>
    <button aria-label="Make current"><svg><use href="#lay"/></svg></button><button aria-label="Layer previous"><svg><use href="#layb"/></svg></button><button aria-label="Layer states"><svg><use href="#layp"/></svg></button>
  </div>
  <div class="tb"><i class="grip"></i><div class="combo c149"><svg><use href="#sq"/></svg><select aria-label="Color"><option>ByLayer</option></select></div><i class="sep"></i>
    <div class="combo c160"><svg class="ln60" viewBox="0 0 60 16"><path d="M0 8.500h60" stroke="#000"/></svg><select aria-label="Linetype"><option>ByLayer</option></select></div><i class="sep"></i>
    <div class="combo c125"><svg class="ln35" viewBox="0 0 35 16"><path d="M0 8.500h35" stroke="#000"/></svg><select aria-label="Lineweight"><option>ByLayer</option></select></div><i class="sep"></i>
    <div class="combo c120 off"><select aria-label="Plot style" disabled><option>ByColor</option></select></div>
  </div>
  <div class="tb"><i class="grip"></i><button aria-label="Mesh box"><svg><use href="#mesh"/></svg></button><button aria-label="Smooth object"><svg><use href="#sm"/></svg></button><button aria-label="Smooth more"><svg><use href="#smp"/></svg></button><button aria-label="Smooth less"><svg><use href="#smm"/></svg></button><button aria-label="Refine mesh"><svg><use href="#smn"/></svg></button><i class="sep"></i><button aria-label="Add crease"><svg><use href="#crs"/></svg></button><button aria-label="Remove crease"><svg><use href="#crx"/></svg></button></div>
</div>
<div class="row">
  <div class="tb"><i class="grip"></i><button aria-label="2D wireframe"><svg><use href="#wf2"/></svg></button><i class="sep"></i><button aria-label="Wireframe"><svg><use href="#wire"/></svg></button><button aria-label="Hidden"><svg><use href="#hid"/></svg></button><button aria-label="Realistic"><svg><use href="#real"/></svg></button><button aria-label="Conceptual"><svg><use href="#conc"/></svg></button><i class="sep"></i><button aria-label="Manage styles"><svg><use href="#vsm"/></svg></button></div>
  <div class="tb"><i class="grip"></i><button aria-label="Named views"><svg><use href="#view"/></svg></button><i class="sep"></i><button aria-label="Top"><svg><use href="#vt"/></svg></button><button aria-label="Bottom"><svg><use href="#vb"/></svg></button><button aria-label="Left"><svg><use href="#vl"/></svg></button><button aria-label="Right"><svg><use href="#vr"/></svg></button><button aria-label="Front"><svg><use href="#vf"/></svg></button><button aria-label="Back"><svg><use href="#vk"/></svg></button><i class="sep"></i><button aria-label="SW isometric"><svg><use href="#iso1"/></svg></button><button aria-label="SE isometric"><svg><use href="#iso2"/></svg></button><button aria-label="NE isometric"><svg><use href="#iso3"/></svg></button><button aria-label="NW isometric"><svg><use href="#iso4"/></svg></button><i class="sep"></i><button aria-label="Create camera"><svg><use href="#cam"/></svg></button><i class="sep"></i><button aria-label="View previous"><svg><use href="#vprev"/></svg></button><div class="combo c139 off"><select aria-label="View name" disabled><option></option></select></div></div>
  <div class="tb"><i class="grip"></i><button aria-label="Polysolid"><svg><use href="#psol"/></svg></button><button aria-label="Box"><svg><use href="#cube"/></svg></button><button aria-label="Wedge"><svg><use href="#wedge"/></svg></button><button aria-label="Cone"><svg><use href="#cone"/></svg></button><button aria-label="Sphere"><svg><use href="#sph"/></svg></button><button aria-label="Cylinder"><svg><use href="#cyl"/></svg></button><button aria-label="Torus"><svg><use href="#tor"/></svg></button><button aria-label="Pyramid"><svg><use href="#pyr"/></svg></button><button aria-label="Helix"><svg><use href="#helix"/></svg></button><button aria-label="Planar surface"><svg><use href="#psurf"/></svg></button><i class="sep"></i><button aria-label="Presspull"><svg><use href="#bx"/></svg></button><button aria-label="Extrude"><svg><use href="#ext"/></svg></button><button aria-label="Sweep"><svg><use href="#swp"/></svg></button><button aria-label="Revolve"><svg><use href="#rev"/></svg></button><button aria-label="Loft"><svg><use href="#loft"/></svg></button><i class="sep"></i><button aria-label="Union"><svg><use href="#uni"/></svg></button><button aria-label="Subtract"><svg><use href="#sub"/></svg></button><button aria-label="Intersect"><svg><use href="#int"/></svg></button><i class="sep"></i><button aria-label="3D move"><svg><use href="#mv3"/></svg></button><button aria-label="3D rotate"><svg><use href="#rot3"/></svg></button><button aria-label="3D align tool"><svg><use href="#al3"/></svg></button><button aria-label="3D array"><svg><use href="#ar3"/></svg></button></div>
  <div class="tb"><i class="grip"></i><button aria-label="Solid union"><svg><use href="#uni"/></svg></button><button aria-label="Solid subtract"><svg><use href="#sub"/></svg></button><button aria-label="Solid intersect"><svg><use href="#int"/></svg></button><i class="sep"></i><button aria-label="Extrude faces"><svg><use href="#exf"/></svg></button><button aria-label="Move faces"><svg><use href="#mvf"/></svg></button><button aria-label="Offset faces"><svg><use href="#off"/></svg></button><button aria-label="Delete faces"><svg><use href="#delf"/></svg></button><button aria-label="Rotate faces"><svg><use href="#rof"/></svg></button><button aria-label="Taper faces"><svg><use href="#tap"/></svg></button><button aria-label="Copy faces"><svg><use href="#cpf"/></svg></button><button aria-label="Color faces"><svg><use href="#colf"/></svg></button><i class="sep"></i><button aria-label="Fillet edges"><svg><use href="#fil"/></svg></button><button aria-label="Chamfer edges"><svg><use href="#cha"/></svg></button><button aria-label="Copy edges"><svg><use href="#cpe"/></svg></button><button aria-label="Color edges"><svg><use href="#colf"/></svg></button><i class="sep"></i><button aria-label="Imprint"><svg><use href="#imp"/></svg></button><button aria-label="Clean"><svg><use href="#cln"/></svg></button><button aria-label="Separate"><svg><use href="#sepr"/></svg></button><button aria-label="Shell"><svg><use href="#shl"/></svg></button><button aria-label="Check"><svg><use href="#chk"/></svg></button></div>
</div>
</section>

<main class="work">
<div class="left">
  <div class="docrow">
    <div class="side"><div class="tb vert"><i class="grip"></i>
      <button aria-label="Line"><svg><use href="#line"/></svg></button><button aria-label="Construction line"><svg><use href="#xl"/></svg></button><button aria-label="Polyline"><svg><use href="#pl"/></svg></button><button aria-label="Polygon"><svg><use href="#pent"/></svg></button><button aria-label="Rectangle"><svg><use href="#rect"/></svg></button><button aria-label="Arc"><svg><use href="#arc"/></svg></button><button aria-label="Circle"><svg><use href="#cir"/></svg></button><button aria-label="Revision cloud"><svg><use href="#cloud"/></svg></button><button aria-label="Spline"><svg><use href="#spl"/></svg></button><button aria-label="Ellipse"><svg><use href="#ell"/></svg></button><button aria-label="Ellipse arc"><svg><use href="#ella"/></svg></button><button aria-label="Insert block"><svg><use href="#ins"/></svg></button><button aria-label="Make block"><svg><use href="#mkb"/></svg></button><button aria-label="Point"><svg><use href="#pt"/></svg></button><button aria-label="Hatch"><svg><use href="#hat"/></svg></button><button aria-label="Gradient"><svg><use href="#grad"/></svg></button><button aria-label="Region"><svg><use href="#reg"/></svg></button><button aria-label="Table"><svg><use href="#tab"/></svg></button><button aria-label="Multiline text"><svg><use href="#txt"/></svg></button><button aria-label="Add selected"><svg><use href="#addsel"/></svg></button>
    </div></div>
    <div class="doc">
      <div class="docmain">
        <div class="canvas">
          <div class="vplabel">[−][Custom View][Conceptual]</div>
          <svg class="scene" viewBox="31 140 1658 776" preserveAspectRatio="xMidYMid slice" role="img" aria-label="Fan model">
            <defs>
              <linearGradient id="hub" x1="0" x2="1" y1="0" y2="0"><stop offset="0" stop-color="#d3d3d8"/><stop offset=".06" stop-color="#e6e6d4"/><stop offset=".2" stop-color="#efefd5"/><stop offset=".35" stop-color="#e5e5d3"/><stop offset=".5" stop-color="#d2d2d2"/><stop offset=".62" stop-color="#c2c1ce"/><stop offset=".75" stop-color="#a9a8cb"/><stop offset=".87" stop-color="#8785c4"/><stop offset=".95" stop-color="#6361bc"/><stop offset="1" stop-color="#4340b4"/></linearGradient>
              <linearGradient id="rimb" gradientUnits="userSpaceOnUse" x1="209" x2="728" y1="0" y2="0"><stop offset="0" stop-color="#e0e0d6"/><stop offset=".25" stop-color="#ebebd6"/><stop offset=".4" stop-color="#d5d4d4"/><stop offset=".58" stop-color="#aaa9cd"/><stop offset=".75" stop-color="#b5b4cf"/><stop offset="1" stop-color="#c9c8d0"/></linearGradient>
              <linearGradient id="webb" gradientUnits="userSpaceOnUse" x1="400" y1="485" x2="440" y2="570"><stop offset="0" stop-color="#5856bc"/><stop offset=".5" stop-color="#6664bd"/><stop offset="1" stop-color="#7472c1"/></linearGradient>
              <linearGradient id="rimf" gradientUnits="userSpaceOnUse" x1="432" x2="929" y1="0" y2="0"><stop offset="0" stop-color="#dcdcd6"/><stop offset=".15" stop-color="#f0f0d4"/><stop offset=".6" stop-color="#e2e2d4"/><stop offset=".78" stop-color="#c0bfd0"/><stop offset=".92" stop-color="#8d8bc6"/><stop offset="1" stop-color="#5b59ba"/></linearGradient>
              <linearGradient id="webf" gradientUnits="userSpaceOnUse" x1="700" y1="505" x2="690" y2="570"><stop offset="0" stop-color="#4441b6"/><stop offset="1" stop-color="#6361bf"/></linearGradient>
              <linearGradient id="webr" gradientUnits="userSpaceOnUse" x1="950" y1="500" x2="1430" y2="530"><stop offset="0" stop-color="#e9e9d5"/><stop offset=".3" stop-color="#dadad4"/><stop offset="1" stop-color="#cfcfd1"/></linearGradient>
              <linearGradient id="rimr" gradientUnits="userSpaceOnUse" x1="902" x2="1431" y1="0" y2="0"><stop offset="0" stop-color="#dedfd5"/><stop offset=".3" stop-color="#efefd4"/><stop offset=".45" stop-color="#dcdcd3"/><stop offset=".65" stop-color="#9b99c9"/><stop offset="1" stop-color="#5a57be"/></linearGradient>
              <linearGradient id="riml" gradientUnits="userSpaceOnUse" x1="1180" x2="1460" y1="0" y2="0"><stop offset="0" stop-color="#dcdcd4"/><stop offset=".5" stop-color="#c9c8d1"/><stop offset=".75" stop-color="#9694c9"/><stop offset="1" stop-color="#4b48ba"/></linearGradient>
              <linearGradient id="face" x1="0" x2="0" y1="0" y2="1"><stop offset="0" stop-color="#b4b5b6"/><stop offset="1" stop-color="#8e8f91"/></linearGradient>
            </defs>
            <path fill="url(#hub)" stroke="#fff" stroke-width="2" d="M706 401l60-1h166l65 1v235l-31 1H736l-30-1z"/>
            <path stroke="#fff" stroke-width="3" d="M708 402h58l60-1h100l70 1"/>
            <path fill="#f1f1d8" stroke="#fff" stroke-width="2" d="M491 466l9-4 31-2h20l45 2 48 3h52l30-5v8l-80 6z"/>
            <path fill="url(#webb)" d="M217 513l21-9 52-7 68-7 62-4 62-1 69 2h76l62-3 39-8-6 14-12 16-200 30-78 24-36-3-127-12-35-7-17-10-8-10z"/>
            <path fill="url(#rimb)" d="M209 503q2-8 12-11l27-8 42-7 48-5 55-3 55-3h41l80 4h70l57-3 29-6 3 14-1 4-38 7-62 3h-76l-69-2-62 1-62 4-68 7-52 7q-20 3-26 12z"/>
            <path stroke="#fff" stroke-width="2" d="M432 560l-36-3-58-4-69-8-35-7-17-10-8-10v-15q2-8 12-11l27-8 42-7 48-5 55-3 55-3h41"/>
            <path stroke="#8482c0" stroke-width="2" d="M222 510l16-7 52-7 68-7 62-4 62-1 69 2h76l62-3 38-7"/>
            <g stroke="#fff"><path stroke-width="1.500" d="M217 513q4-6 21-9l52-7 68-7 62-4 62-1 69 2h76l62-3 39-8"/><path d="M212 500q10-6 36-12l60-8 60-5 80-5 50-1 80 4h70l60-3 20-5M212 509q14-10 70-15l80-8 60-4 60-4 130 2 76-1 38-6M217 513v12l18 13M489 466l9 10-1 9-3 3M210 508l7 5"/></g>
            <path fill="url(#webf)" stroke="#fff" d="M432 560l9-10 21-6 44-4 211-25 115-9-30 20-12 2-20 14-7 1-20 18-37 2-58 4H462l-21-3z"/>
            <path stroke="#fff" stroke-width="2" d="M432 560l9 4 21 3h93l93-2 58-2 37-2"/>
            <path fill="#dfdfd3" d="M820 487l30-10 17-8 11-8-3 7 1 4 11-1-40 14z"/>
            <path stroke="#fff" d="M823 487l30-11 20-4M878 461l-3 7 1 4h11"/>
            <path fill="#7a78bd" d="M879 462h8v8h-9z"/><path stroke="#fff" d="M884 470l2-8v8"/>
            <path fill="url(#rimf)" stroke="#fff" stroke-width="1.500" d="M432 560v-15q2-5 9-6l28-7 37-5 56-7 75-10 79-9 64-8 50-8 23-9 22-4 12-1 40-1 2 7-1 9-15 7-33 5-50 7-50 6-63 6-37 6-67 9-51 6-56 7-44 7q-18 4-24 9z"/>
            <g stroke="#fff"><path d="M433 552q4-10 73-19l130-15 144-19 80-12 68-8M438 553q6-8 70-15l130-17 150-19 80-11 60-11M506 527v18M716 501l1 17M920 478l8-4"/></g>
            <path stroke="#4340b4" stroke-width="2" d="M830 503l50-7 34-6 12-6"/>
            <path fill="#c0bfcc" stroke="#fff" stroke-width="2" d="M1017 463l26-4h27l50 3 40 5v3h-70z"/>
            <path fill="#cccbd1" d="M1107 564l133-28 180-26 17 4 15 6 7 8v12l-9 8-33 8-47 5-63 2z"/>
            <path fill="url(#riml)" d="M1130 562l110-15 67-1 56-3 50-6 34-8 12-1v12l-9 8-33 8-47 5-63 2h-127z"/>
            <path stroke="#4340b4" stroke-width="2" d="M1135 561h172l63-2 47-5 33-8 7-5"/>
            <path stroke="#fff" stroke-width="2" d="M1107 564l73-1h127l63-2 47-5 33-8q9-3 9-8v-12q-1-5-7-8l-15-6-17-4"/>
            <path stroke="#fff" d="M1240 547l67-1 56-3 50-6 34-8q7-3 5-9M1200 551l107 1 56-3 50-5 40-9M1180 557h127l60-2 50-5 38-8M1307 546v17"/>
            <path fill="url(#webr)" d="M993 458l24 4 73 7h63l67-3 53-2 57 3 43 4 34 5 16 7 1 8-21 12-123 26-67 11-133 14-67 4-33-3-78-7 15-11 43-29 28-29z"/>
            <path fill="url(#rimr)" d="M902 546l45 2 33 1 33 2 67-4 67-6 66-8 67-11 67-13 56-12 17-6 4-8 7 7-1 10-7 8-43 11-67 15-56 10-60 10-90 10-60 4-50 1-90-6-5-5z"/>
            <path stroke="#4441b6" stroke-width="3" d="M1090 564l107-12 60-10 56-10 67-15 43-11 5-8"/>
            <path stroke="#5654bc" stroke-width="1" d="M905 561l65 5h77l60-4"/>
            <path stroke="#fff" stroke-width="2" d="M993 458l24 4 73 7h63l67-3 53-2 57 3 43 4 34 5 16 7q8 3 8 7l-1 10q-1 5-7 8l-43 11-67 15-56 10-60 10-90 10-60 4-50 1-90-6"/>
            <g stroke="#fff"><path d="M902 545l45 3 60 4 73-5 67-6 66-8 67-11 67-13 56-12q18-5 20-14M902 550l80 6 98-4 90-10 90-15 140-27 28-10M902 556l100 6 90-5 90-11 90-15 110-22 46-13M1010 552v16M1257 526v18M1403 497l3 16"/></g>
            <path stroke="#fff" shape-rendering="crispEdges" d="M400 636.500h96M447.500 589v95M444.500 633.500h6v6h-6z"/>
            <path stroke="#2f9a35" stroke-width="6" d="M50 864h30"/><path stroke="#bd5b5b" stroke-width="6" d="M83 864h38"/><path stroke="#d98a8a" d="M83 864h38"/><path stroke="#4a7fd8" stroke-width="6" d="M81 816v49"/><path stroke="#8db8f5" d="M80 816v49"/>
            <path stroke="#0f63f0" d="M79 802.500h12L80 814.500h11"/><path stroke="#19a319" d="M48 849l6 6 6-6M54 855v6"/><path stroke="#e02020" d="M117 849l12 12M129 849l-12 12"/>
            <path fill="#434a54" fill-rule="evenodd" d="M1540 250a67 7 0 0 0 134 0a67 7 0 0 0-134 0zM1554 250a53 4 0 0 1 106 0a53 4 0 0 1-106 0z"/>
            <path stroke="#c0c2c5" stroke-width="2" d="M1549 253h10M1642 254l20 1M1656 246h6M1546 246h4"/>
            <path fill="url(#face)" d="M1574 198l28-3v52l-28-3zM1602 195l39 3v46l-39 3z"/><path stroke="#c4c5c7" stroke-dasharray="9 2" d="M1574.500 198v46M1574 198l28-3 39 3"/><path fill="#8d8f96" d="M1597 205h12v33h-12z"/><path stroke="#3a3f46" stroke-dasharray="12 4" d="M1602.500 195v52"/>
            <text class="cubetext" x="1579" y="225">LEFT</text><text class="cubetext" x="1610" y="225">FRONT</text>
          </svg>
          <button class="ucsname">Unnamed<svg width="10" height="8"><path d="M1 1.500h8l-4 5z" stroke="#7a7e88"/></svg></button>
        </div>
        <div class="vscroll"><svg width="12" height="10"><path d="M1.500 8L6 3l4.500 5"/></svg><i class="thumb"></i><svg width="12" height="10"><path d="M1.500 2L6 7l4.500-5"/></svg></div>
      </div>
      <div class="docfoot">
        <div class="navs"><button aria-label="First"><svg width="12" height="12"><path d="M2.500 1v10"/><path class="f" d="M10 1v10L4 6z"/></svg></button><button aria-label="Previous"><svg width="12" height="12"><path class="f" d="M9 1v10L3 6z"/></svg></button><button aria-label="Next"><svg width="12" height="12"><path class="f" d="M3 1v10l6-5z"/></svg></button><button aria-label="Last"><svg width="12" height="12"><path d="M9.500 1v10"/><path class="f" d="M2 1v10l6-5z"/></svg></button></div>
        <div class="ltabs"><button class="on">Model</button><button>Layout1</button><button>Layout2</button></div>
        <div class="hscroll"><svg width="10" height="12"><path d="M7 2L3 6l4 4"/></svg><i class="thumb"></i><svg class="end" width="10" height="12"><path d="M3 2l4 4-4 4"/></svg></div>
      </div>
    </div>
    <div class="side">
      <div class="tb vert"><i class="grip"></i>
      <button aria-label="Erase"><svg><use href="#era"/></svg></button><button aria-label="Copy"><svg><use href="#cp"/></svg></button><button aria-label="Mirror"><svg><use href="#mir"/></svg></button><button aria-label="Offset"><svg><use href="#ofs"/></svg></button><button aria-label="Array"><svg><use href="#arr"/></svg></button><button aria-label="Move"><svg><use href="#mov"/></svg></button><button aria-label="Rotate"><svg><use href="#rot"/></svg></button><button aria-label="Scale"><svg><use href="#scl"/></svg></button><button aria-label="Stretch"><svg><use href="#str"/></svg></button><button aria-label="Trim"><svg><use href="#trim"/></svg></button><button aria-label="Extend"><svg><use href="#extd"/></svg></button><button aria-label="Break at point"><svg><use href="#brp"/></svg></button><button aria-label="Break"><svg><use href="#brk"/></svg></button><button aria-label="Join"><svg><use href="#join"/></svg></button><button aria-label="Chamfer"><svg><use href="#chm"/></svg></button><button aria-label="Fillet"><svg><use href="#flt"/></svg></button><button aria-label="Blend curves"><svg><use href="#bln"/></svg></button><button aria-label="Explode"><svg><use href="#expl"/></svg></button>
      </div>
      <div class="tb vert"><i class="grip"></i>
      <button aria-label="Bring to front"><svg><use href="#do1"/></svg></button><button aria-label="Send to back"><svg><use href="#do2"/></svg></button><button aria-label="Bring above"><svg><use href="#do3"/></svg></button><button aria-label="Send under"><svg><use href="#do4"/></svg></button><i class="sep"></i><button aria-label="Text to front"><svg><use href="#do5"/></svg></button><button aria-label="Hatches to back"><svg><use href="#do6"/></svg></button>
      </div>
    </div>
  </div>
  <div class="cmd">
    <div class="cmdside"><i></i><button aria-label="Close command line"><svg width="14" height="14"><path stroke="#fff" stroke-width="2.500" d="M2 2l10 10M12 2L2 12"/></svg></button><button aria-label="Customize"><svg width="18" height="18"><path stroke="#e6e8ec" stroke-width="4" d="M7 7l9 9"/><path stroke="#e6e8ec" stroke-width="3" d="M2 3c-1 5 4 7 6 4s0-6-3-5.500"/></svg></button></div>
    <div class="cmdmain"><output class="hist">Command:</output>
      <label class="entry"><svg width="19" height="18"><rect x=".5" y=".5" width="18" height="17" rx="2" fill="#cfd3de" stroke="#c0c4ce"/><path stroke="#70757f" stroke-width="2" d="M4 5l4 4-4 4M10 13h5"/></svg><span class="caret"></span><i class="cursor"></i><input type="text" aria-label="Command"></label>
    </div>
  </div>
</div>
<aside class="palette">
  <div class="ptabs"><button class="on"><span>Modeli</span></button><button><span>Constra...</span></button><button><span>Annota...</span></button><button><span>Archite...</span></button><button><span>Mecha...</span></button><button><span>Electric</span></button><button><span>Civil</span></button><button class="cutoff"><span>Structu</span></button><button><span>Hatche...</span></button><button><span>Tables</span></button><button><span>Comm...</span></button><button><span>Leaders</span></button><i></i><i></i><i></i></div>
  <div class="pbody">
    <h2><i></i>Tool Palette...</h2>
    <ul>
      <li><svg viewBox="0 0 30 30"><path fill="#9198a4" d="M8 3h15v25H8z"/><path stroke="#4d5460" stroke-width="5" stroke-linecap="round" d="M6 4h19M6 12l19-3M6 20l19-3M6 27l19-3"/><path stroke="#f2f4f8" stroke-width="3" stroke-linecap="round" d="M6 4h19M6 12l19-3M6 20l19-3M6 27l19-3"/></svg>Cylindric...</li>
      <li><svg viewBox="0 0 30 30"><path fill="url(#gh)" stroke="#4d5460" d="M3 2v22q8 7 24 6V8Q22 1 3 2z"/><path fill="#f4f5f8" stroke="#8a919c" d="M3 2q18-1 24 6Q10 9 3 2z"/></svg>Elliptic...</li>
      <li><svg viewBox="0 0 30 30"><path fill="url(#gh)" stroke="#4d5460" d="M11 4L2 23q2 5 13 5t14-5L20 4q-4-4-9 0z"/></svg>Frustu...</li>
      <li><svg viewBox="0 0 30 30"><path fill="#e4e7ec" stroke="#4d5460" d="M11 3L1 21l15 8 14-7L20 3l-4-2z"/><path fill="#a5adb9" d="M16 6v23l13-7L20 3z"/></svg>Frustu...</li>
      <li><svg viewBox="0 0 30 30"><path stroke="#3a3f46" stroke-width="1.500" d="M4 3v24h22M4 27L20 11"/><path fill="#3a3f46" d="M4 1l3 5H1zM28 27l-5-3v6z"/></svg>UCS</li>
      <li><svg viewBox="0 0 30 30"><path stroke="#3a3f46" stroke-width="1.500" d="M4 3v24h22"/><path fill="#3a3f46" d="M4 1l3 5H1zM28 27l-5-3v6z"/><path fill="#222" d="M12 12l6-4v8z"/><path stroke="#222" stroke-width="2" d="M16 12c6-2 7 2 4 6"/></svg>UCS Pr...</li>
      <li><svg viewBox="0 0 30 30"><path fill="#8c929c" stroke="#3a3f46" d="M1 29V6l6-5v26z"/><path fill="#bfe2f5" stroke="#1a75c8" d="M5 18V8l4-4h11v10l-4 4z"/><path fill="#e4e7ec" stroke="#4d5460" d="M4 28v-9h14l3-3h9v8l-4 4z"/></svg>3D Align</li>
      <li><svg viewBox="0 0 30 30"><circle cx="14" cy="15" r="12" fill="#e4e6ea" stroke="#4d5460" stroke-width="1.500"/><circle cx="14" cy="15" r="8" stroke="#4d5460" stroke-width="1.500"/><circle cx="14" cy="15" r="4.500" stroke="#4d5460" stroke-width="1.500"/><circle cx="14" cy="15" r="1.500" stroke="#4d5460"/><path stroke="#4d5460" stroke-width="1.500" d="M14 3q14 0 15 14"/></svg>2D Spiral</li>
    </ul>
  </div>
</aside>
</main>

<section class="status">
  <div class="coords">-415, 874, 0</div>
  <div class="grp"><button aria-label="Infer constraints"><svg><use href="#st1"/></svg></button><button aria-label="Snap"><svg><use href="#st2"/></svg></button><button aria-label="Grid"><svg><use href="#st3"/></svg></button><button class="on" aria-label="Ortho"><svg><use href="#st4"/></svg></button><button aria-label="Polar"><svg><use href="#st5"/></svg></button><button class="on" aria-label="Object snap"><svg><use href="#st6"/></svg></button><button aria-label="3D snap"><svg><use href="#st7"/></svg></button><button class="on" aria-label="Tracking"><svg><use href="#st8"/></svg></button><button class="on" aria-label="Dynamic UCS"><svg><use href="#st9"/></svg></button><button class="on" aria-label="Dynamic input"><svg><use href="#st10"/></svg></button><button aria-label="Lineweight display"><svg><use href="#st11"/></svg></button><button class="on" aria-label="Transparency"><svg><use href="#st12"/></svg></button><button aria-label="Quick properties"><svg><use href="#st13"/></svg></button><button aria-label="Selection cycling"><svg><use href="#st14"/></svg></button><button aria-label="Annotation monitor"><svg><use href="#st15"/></svg></button></div>
  <div class="grp right"><button class="model">MODEL</button><button aria-label="Quick view layouts"><svg><use href="#sr1"/></svg></button><button aria-label="Quick view drawings"><svg><use href="#sr2"/></svg></button><i class="g12"></i><button class="scale"><svg><use href="#ann"/></svg>1:1<span class="caret"></span></button><button aria-label="Annotation visibility"><svg><use href="#ann2"/></svg></button><button aria-label="Auto scale"><svg><use href="#ann3"/></svg></button><i class="g6"></i><button aria-label="Workspace switching"><svg><use href="#gear"/></svg></button><button aria-label="Lock UI"><svg><use href="#lockg"/></svg></button><button aria-label="Hardware"><svg><use href="#hw"/></svg></button><button class="tray" aria-label="Status tray"><svg><use href="#iso9"/></svg><svg><use href="#bulb"/></svg></button><button class="thin" aria-label="Status menu"><span class="caret"></span></button><button aria-label="Clean screen"><svg><use href="#cls"/></svg></button></div>
</section>

<footer class="taskbar">
  <button class="start" aria-label="Start"><svg width="20" height="20"><path fill="#fff" d="M0 3l8-1.200V9.500H0zM9 1.600L20 0v9.500H9zM0 10.500h8v8L0 17.300zM9 10.500h11V20L9 18.500z"/></svg></button>
  <label class="search"><svg width="28" height="28"><circle cx="14" cy="14" r="11.500" stroke="#000" stroke-width="3"/></svg><input type="text" placeholder="Type here to search" aria-label="Search"><svg width="16" height="20"><path stroke="#222" d="M4.500.5h7v8h-7z"/><path fill="#222" d="M4 6h8v8H4z"/><path stroke="#222" stroke-width="1.500" d="M1.500 9v3c0 4 3 4.500 6.500 4.500s6.500-.5 6.500-4.500V9M8 16v3M5 19h6"/></svg></label>
  <div class="apps">
    <button class="first" aria-label="Task view"><svg width="20" height="20"><path stroke="#fff" stroke-width="1.300" d="M0 5h13M0 15h13M1 0v4h11V0M1 20v-4h11v4M1 5.500v9h11v-9M18.500 0v5M18.500 11v9"/><path fill="#fff" d="M17 7h3v3h-3z"/></svg></button>
    <button aria-label="Edge"><svg width="26" height="28"><path fill="#0f7bd8" d="M1 13C2 5 7 1 13 1c7 0 12 5 12 12v3H9c0 4 3 6 7 6 3 0 5-1 7-2v5c-3 2-6 2-9 2-7 0-11-5-11-11 0-5 3-8 7-10-4 1-7 3-9 7zm8-2h9c0-6-8-6-9 0z"/></svg></button>
    <button aria-label="File Explorer"><svg width="28" height="26"><path fill="#f6c62d" d="M0 1h13v5H0z"/><path fill="#ffe38f" d="M0 5h28v19H0z"/><path fill="#2fb2ea" d="M5 14h18v10h-4v-6H9v6H5z"/></svg></button>
    <button aria-label="Camera"><svg width="30" height="26"><path fill="#fff" d="M0 4h8l3-3h8l3 3h8v20H0z"/><ellipse cx="16" cy="14" rx="8" ry="8" fill="#000"/><ellipse cx="15" cy="14" rx="7" ry="8" fill="#000" stroke="#fff"/></svg></button>
    <button aria-label="Store"><svg width="30" height="30"><path stroke="#fff" stroke-width="1.500" d="M9 9V5c0-5 10-5 10 0v4M12 9V5c0-5 9-5 9 0v4"/><path fill="#fff" d="M0 8h29v21H1z"/><path fill="#f25022" d="M8 12h6v6H8z"/><path fill="#7fba00" d="M15 12h6v6h-6z"/><path fill="#00a4ef" d="M8 19h6v6H8z"/><path fill="#ffb900" d="M15 19h6v6h-6z"/></svg></button>
    <button aria-label="Groove"><svg width="30" height="30"><path stroke="#fff" stroke-width="2.500" d="M22 4a13.500 13.500 0 1 0 5 5"/><circle cx="15" cy="15" r="4" stroke="#fff" stroke-width="3.500"/><path stroke="#fff" stroke-width="3" d="M22 11l5-5"/></svg></button>
    <button aria-label="Mail"><svg width="30" height="26"><path fill="#fff" d="M0 10L15 1l15 9v15H0z"/><path fill="#000" d="M3 10h24l-9 5 6 6-12-6z"/></svg></button>
    <button class="run" aria-label="Chrome"><svg width="28" height="28"><circle cx="14" cy="14" r="13.500" fill="#f9cd3c"/><path fill="#dd4b3e" d="M2.300 7.300A13.500 13.500 0 0 1 26 8H14l-6 8z"/><path fill="#1a9f5b" d="M2.300 7.300L9 18l6 3-3 6.400A13.500 13.500 0 0 1 2.300 7.300z"/><circle cx="14" cy="14" r="6" fill="#4a8af4" stroke="#fff" stroke-width="1.500"/></svg></button>
    <button class="run active" aria-label="AutoCAD"><svg width="30" height="30"><path fill="#181818" d="M1 5h28v16H1z"/><path fill="#d00808" d="M1 21h28v8H1z"/><path fill="#d8d8d8" stroke="#888" d="M4 23L7 1l4-1 9 19-4 2-2-4-4 1-1 5z"/><path fill="#444" d="M9 14l1-6 4 5z"/><path stroke="#888" d="M20 9l3-2v9M25 7h3v5l-3 6"/></svg></button>
  </div>
  <div class="tray2">
    <svg class="people" width="20" height="20"><circle cx="7" cy="9" r="3.500"/><circle cx="14" cy="4" r="3.500"/><path d="M1 19c1-8 11-8 12-1M12 11c3-4 7-2 7 3"/></svg>
    <svg width="18" height="12"><path d="M1 10l8-8 8 8"/></svg>
    <svg width="20" height="16"><path d="M1 2.500h17v10H1z"/><path fill="#fff" d="M2 4h4v7H2z"/><circle cx="14" cy="11" r="5" fill="#12a038" stroke="none"/><path d="M14 8v5" stroke-width="2"/></svg>
    <svg width="17" height="17"><path d="M1 16C2 7 8 2 16 1M5 16c1-6 5-10 11-11M9 16c1-4 3-6 7-7"/><circle cx="14" cy="15" r="1.500" fill="#fff"/></svg>
    <svg width="21" height="18"><path d="M1 6h4l4-4v14l-4-4H1zM12 6c2 2 2 4 0 6M15 4c3 3 3 7 0 10M18 2c4 4 4 10 0 14"/></svg>
    <div class="lang"><span>ENG</span><span>IN</span></div>
    <div class="clock"><span>20:09</span><span>23-07-2018</span></div>
    <svg width="22" height="22"><path stroke-width="1.500" d="M1 2h19v15h-7l-3 3-2-3H1z"/></svg>
  </div>
</footer>
</body>
</html>
```

FILE: styles.css
```css
* { box-sizing: border-box; }
html, body { height: 100%; }
body {
  margin: 0;
  display: flex;
  flex-direction: column;
  background: #686868;
  color: #111;
  font: 14px/18px "Open Sans", "Noto Sans", sans-serif;
  overflow: hidden;
}
button, select, input { font: inherit; color: inherit; margin: 0; padding: 0; border: 0; background: none; border-radius: 0; }
button { display: flex; align-items: center; justify-content: center; }
h1, h2, ul { margin: 0; padding: 0; font-size: inherit; font-weight: 400; list-style: none; }
svg { fill: none; flex: none; }
i { font-style: normal; flex: none; }
.sprite { position: absolute; }
.w { fill: #fff; }
.s { fill: #e3e6eb; }
.g { fill: #8d96a3; }
.lg { fill: #c3c9d2; }
.b { fill: #bfe2f5; stroke: #1a75c8; }
.bf { fill: #1a75c8; stroke: none; }
.k { fill: #222; stroke: none; }
.k2 { stroke: #2b3036; stroke-width: 1.5px; }
.n { fill: #fff; stroke: #2b3036; }
.caret { width: 0; height: 0; border: 4px solid transparent; border-top: 5px solid #3e454e; border-bottom: 0; }

/* Title bar */
.titlebar { position: relative; display: flex; flex: none; height: 30px; background: #fff; padding: 0 3px 0 40px; }
.appmenu {
  position: absolute; left: 0; top: 0; z-index: 2; width: 41px; height: 41px;
  border: 1px solid #2c2c2c; background: linear-gradient(#b5b5b5, #7c7c7c); justify-content: flex-start;
}
.titlebar .title { flex: 1; display: flex; justify-content: center; align-items: center; gap: 20px; padding-right: 50px; color: #111; }
.wincontrols { display: flex; }
.wincontrols button { width: 58px; height: 28px; }
.wincontrols svg { stroke: #8c8c8c; }

/* Menu bar */
.menubar { display: flex; flex: none; height: 26px; padding-left: 42px; border-top: 1px solid #2c2c2c; background: linear-gradient(#a9a9a9, #535353); color: #fff; }
.menubar button { padding: 0 13px 0 14px; }
.docctl { margin-left: auto; display: flex; align-items: center; }
.docctl svg { stroke: #222; }

/* Toolbars */
.toolbars { flex: none; display: flex; flex-direction: column; gap: 3px; padding-bottom: 4px; }
.row { display: flex; gap: 1px; height: 24px; }
.tb { display: flex; background: #ebebeb; border: 1px solid #353535; border-left: 0; }
.tb button { width: 23px; height: 22px; flex: none; }
.tb svg { width: 16px; height: 16px; stroke: #3e454e; }
.tb > .grip { width: 8px; border: solid #4e4e4e; border-width: 4px 2px; background: repeating-linear-gradient(#1e1e1e 0 1px, #777 1px 2px); }
.tb > .sep { width: 1px; margin: 1px 3px 1px 2px; background: #8a8a8a; }
.tb button.drop { width: 12px; }
.drop.dim .caret { border-top-color: #999; }
.combo { display: flex; align-items: center; flex: none; height: 22px; background: #e1e1e1; border: 1px solid #adadad; padding: 0 8px 0 5px; gap: 3px; }
.combo select { appearance: none; flex: 1; min-width: 0; height: 20px; color: #000; outline: 0; }
.combo::after { content: ""; flex: none; width: 7px; height: 7px; border: solid #555; border-width: 0 1px 1px 0; transform: rotate(45deg); margin-bottom: 4px; }
.combo.deep { padding-left: 19px; }
.combo.mid { padding-left: 9px; }
.combo.off { background: #cccccc; padding-left: 8px; }
.combo.off select { color: #7b7b7b; opacity: 1; }
.combo.off::after { border-color: #aaa; }
.c120 { width: 120px; }
.c125 { width: 125px; }
.c139 { width: 139px; }
.tb .c149 { width: 149px; padding-left: 2px; gap: 1px; }
.c160 { width: 160px; }
.c175 { width: 175px; }
.tb .c299 { width: 299px; gap: 0; padding-left: 4px; }
.tb .ln60 { width: 60px; }
.tb .ln35 { width: 35px; }
.tb.vert { flex-direction: column; width: 25px; border-left: 1px solid #353535; border-top: 0; }
.tb.vert > .grip { width: auto; height: 9px; border-width: 3px 4px; background: repeating-linear-gradient(90deg, #1e1e1e 0 1px, #888 1px 2px); }
.tb.vert button { height: 22px; }
.tb.vert > .sep { width: auto; height: 1px; margin: 2px 2px 1px; }

/* Work area */
.work { flex: 1; min-height: 0; display: flex; gap: 6px; }
.left { flex: 1; min-width: 0; display: flex; flex-direction: column; gap: 4px; }
.docrow { flex: 1; min-height: 0; display: flex; gap: 4px; }
.side { display: flex; flex-direction: column; gap: 1px; }
.docrow > .side:last-child { padding-right: 2px; }
.doc { flex: 1; min-width: 0; display: flex; flex-direction: column; border: 2px solid #a5a5a5; border-right-color: #fff; border-bottom-color: #fff; background: #f0f0f0; }
.docmain { flex: 1; min-height: 0; display: flex; }
.canvas { position: relative; flex: 1; min-width: 0; background: #212830; overflow: hidden; }
.scene { position: absolute; inset: 0; width: 100%; height: 100%; }
.vplabel { position: absolute; left: 5px; top: 4px; z-index: 1; color: #fff; font-size: 11px; }
.cubetext { font: 700 8px "Liberation Sans", sans-serif; fill: #4a4e55; }
.ucsname { position: absolute; right: 48px; top: 168px; width: 68px; height: 18px; gap: 4px; border: 1px solid #8a8d98; border-radius: 4px; background: #a3a5b1; color: #4d5059; font: 10px/14px "DejaVu Sans", sans-serif; }
.vscroll, .hscroll { background: #f0f0f0; display: flex; align-items: center; }
.vscroll svg, .hscroll svg { stroke: #555; stroke-width: 2px; }
.vscroll { flex-direction: column; width: 21px; padding: 5px 0; border-bottom: 1px solid #aaa; }
.vscroll .thumb { width: 19px; height: 21px; background: #cdcdcd; margin-top: 225px; margin-bottom: auto; }
.docfoot { flex: none; display: flex; height: 20px; font: 13px/18px "Liberation Sans", Arial, sans-serif; }
.navs { display: flex; }
.navs button { width: 19px; height: 19px; border: 1px solid #bbb; border-width: 0 1px 1px 0; }
.navs svg { stroke: #555; }
.navs .f { fill: #555; stroke: none; }
.ltabs { display: flex; }
.ltabs button { width: 68px; height: 19px; padding-right: 8px; background: linear-gradient(106deg, transparent 62px, #777 62px 64px, transparent 64px); }
.ltabs .on { padding-right: 0; background: #212830; color: #fff; clip-path: polygon(0 0, 100% 0, 61px 100%, 6px 100%); }
.hscroll { width: 583px; margin-left: auto; padding: 0 5px 0 10px; border-left: 4px double #999; }
.hscroll .thumb { width: 21px; height: 18px; background: #cdcdcd; margin-left: 7px; }
.hscroll .end { margin: 0 21px 0 auto; }

/* Command line */
.cmd { flex: none; display: flex; height: 66px; }
.cmdside { width: 29px; display: flex; flex-direction: column; align-items: center; justify-content: space-between; padding: 5px 2px 1px 0; background: linear-gradient(#8e8e8e, #3e3e3e); }
.cmdside i { width: 21px; height: 6px; background: repeating-linear-gradient(90deg, #bbb 0 2px, transparent 2px 4px); }
.cmdmain { flex: 1; min-width: 0; border: 1px solid #777; }
.hist { display: block; height: 37px; padding: 12px 2px 0; background: #c8c8c8; border-bottom: 1px solid #777; color: #000; font: 18px/22px "DejaVu Sans Mono", monospace; }
.entry { display: flex; align-items: center; height: 27px; padding-left: 5px; gap: 4px; background: #fff; }
.entry .cursor { width: 1px; height: 23px; background: #000; }
.entry .caret { border-top-color: #888; }
.entry input { flex: 1; outline: 0; font: 18px/22px "DejaVu Sans Mono", monospace; }

/* Tool palette */
.palette { flex: none; width: 171px; display: flex; padding: 1px 0 3px; }
.ptabs { width: 27px; padding-top: 28px; display: flex; flex-direction: column; }
.ptabs button { height: 67px; flex: none; padding-left: 2px; background: #c8c8c8; border: solid #444; border-width: 1px 0 0 1px; border-radius: 4px 0 0 2px; }
.ptabs .on { background: #f0f0f0; }
.ptabs .on, .ptabs .cutoff { padding-top: 10px; }
.ptabs span { writing-mode: vertical-rl; transform: rotate(180deg); }
.ptabs i { height: 5px; background: #c8c8c8; border: solid #444; border-width: 1px 0 0 1px; }
.pbody { flex: 1; background: #f0f0f0; border-radius: 4px; overflow: hidden; }
.pbody h2 { height: 26px; display: flex; align-items: center; gap: 7px; padding: 3px 0 0 2px; background: #a0a0a0; color: #111; }
.pbody h2 i { width: 3px; height: 12px; background: repeating-linear-gradient(#333 0 1px, #aaa 1px 2px); align-self: flex-start; }
.pbody li { height: 42px; display: flex; align-items: center; gap: 6px; padding: 2px 0 0 6px; }
.pbody li svg { width: 30px; height: 30px; }
.pbody ul { padding-top: 4px; }

/* Drafting status bar */
.status { flex: none; display: flex; height: 22px; border-top: 1px solid #000; background: linear-gradient(#979797, #7e7e7e); }
.coords { width: 126px; padding-left: 12px; line-height: 21px; font-size: 12px; border-right: 1px solid #444; background: linear-gradient(#a2a2a2, #858585); font-family: "Liberation Sans", sans-serif; }
.grp { display: flex; }
.grp svg { width: 16px; height: 16px; stroke: #3e454e; }
.grp button { width: 22px; height: 21px; border-right: 1px solid #555; background: linear-gradient(#c4c4c4, #959595); }
.grp .on { background: linear-gradient(#e4f3f7, #9ec9d8 50%, #b8dde8); }
.grp.right { margin-left: auto; padding-right: 2px; }
.grp .model { width: 54px; border-left: 1px solid #444; }
.grp .scale { width: 54px; gap: 3px; border-left: 1px solid #444; }
.grp .tray { width: 51px; gap: 6px; background: #8c8c8c; }
.grp .thin { width: 12px; }
.grp .caret { border-top-color: #000; }
.g12 { width: 11px; }
.g6 { width: 6px; }

/* Taskbar */
.taskbar { flex: none; display: flex; height: 50px; background: linear-gradient(100deg, #050807, #0a1210 30%, #040606 50%, #0a1411 70%, #050707); color: #fff; }
.start { width: 60px; }
.search { width: 430px; display: flex; align-items: center; gap: 11px; padding: 0 18px 0 11px; background: #f2f2f2; color: #333; font-size: 16px; }
.search input { flex: 1; min-width: 0; outline: 0; }
.search input::placeholder { color: #444; opacity: 1; }
.apps { display: flex; }
.apps button { width: 62px; height: 50px; }
.apps .first { width: 60px; margin-right: 3px; }
.apps .run { box-shadow: inset 0 -3px #a0f0cf; }
.apps .active { background: #3b403f; }
.tray2 { margin-left: auto; display: flex; align-items: center; padding-right: 30px; gap: 12px; }
.tray2 svg { stroke: #fff; stroke-width: 1.5px; }
.tray2 .people { margin-right: 14px; }
.lang, .clock { display: flex; flex-direction: column; align-items: center; gap: 4px; font-size: 14px; }
.clock { margin: 0 11px 0 4px; }
```
